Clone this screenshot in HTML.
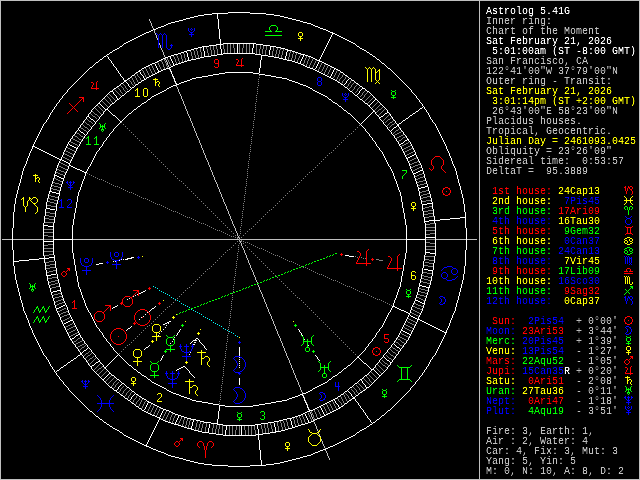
<!DOCTYPE html>
<html><head><meta charset="utf-8"><title>Astrolog 5.41G</title>
<style>
html,body{margin:0;padding:0;background:#000;}
body{width:640px;height:480px;overflow:hidden;position:relative;}
#chart{position:absolute;left:0;top:0;width:640px;height:480px;display:block;}
#info{position:absolute;left:485.5px;top:7.3px;margin:0;padding:0;font-family:"Liberation Mono",monospace;font-size:10px;line-height:10px;letter-spacing:0;color:#BFBFBF;will-change:transform;transform:translateZ(0);filter:url(#sharp);}
#info div{height:10px;white-space:pre;}
.w{color:#FFFFFF}.l{color:#BFBFBF}.y{color:#FFFF00}.r{color:#FF0000}.g{color:#00FF00}.b{color:#0000FF}
</style></head><body>
<svg id="chart" width="640" height="480" viewBox="0 0 640 480" shape-rendering="crispEdges" fill="none" stroke-width="1">
<rect x="0" y="0" width="640" height="480" fill="#000" stroke="none"/>
<defs><filter id="sharp" x="0" y="0" width="100%" height="100%" color-interpolation-filters="sRGB"><feComponentTransfer><feFuncA type="table" tableValues="0 0.05 0.55 1 1"/></feComponentTransfer></filter></defs>
<g transform="translate(0,0.5)">
<path stroke="#FFFFFF" d="M228 12h22M212 13h16M250 13h16M204 14h8M217 14h1M266 14h8M198 15h6M217 15h1M274 15h6M194 16h4M217 16h1M280 16h4M190 17h4M217 17h1M284 17h4M186 18h4M217 18h1M288 18h4M183 19h3M218 19h1M292 19h4M179 20h4M218 20h1M296 20h4M175 21h4M218 21h1M300 21h3M171 22h4M218 22h1M303 22h4M168 23h3M218 23h1M307 23h4M166 24h2M218 24h1M311 24h2M164 25h2M218 25h1M313 25h2M161 26h3M218 26h1M315 26h3M158 27h3M218 27h1M318 27h2M156 28h2M218 28h1M320 28h3M153 29h3M219 29h1M323 29h3M151 30h2M219 30h1M326 30h2M149 31h2M219 31h1M328 31h2M146 32h3M219 32h1M330 32h3M144 33h2M219 33h1M332 33h3M142 34h2M219 34h1M332 34h1M335 34h2M140 35h2M219 35h1M331 35h1M337 35h2M138 36h2M219 36h1M331 36h1M339 36h2M136 37h2M219 37h1M330 37h1M341 37h2M134 38h2M219 38h1M330 38h1M343 38h2M132 39h2M220 39h1M329 39h1M345 39h2M130 40h2M220 40h1M329 40h1M347 40h2M128 41h2M220 41h1M328 41h1M349 41h2M126 42h2M220 42h1M328 42h1M351 42h2M124 43h2M220 43h1M223 43h33M327 43h1M353 43h2M123 44h1M216 44h7M237 44h1M253 44h1M256 44h7M327 44h1M355 44h1M122 45h1M209 45h7M220 45h1M237 45h1M253 45h1M263 45h7M326 45h1M356 45h1M120 46h2M202 46h7M220 46h1M237 46h1M253 46h1M270 46h6M326 46h1M357 46h2M119 47h1M198 47h4M203 47h1M220 47h1M237 47h1M253 47h1M270 47h1M276 47h5M325 47h1M359 47h1M117 48h2M194 48h4M203 48h1M220 48h1M237 48h1M252 48h1M270 48h1M281 48h4M325 48h1M360 48h2M115 49h2M191 49h3M203 49h1M221 49h1M237 49h1M252 49h1M270 49h1M285 49h3M324 49h1M362 49h2M113 50h2M187 50h4M203 50h1M221 50h1M237 50h1M252 50h1M269 50h1M287 50h5M324 50h1M364 50h2M112 51h1M184 51h3M204 51h1M221 51h1M237 51h1M252 51h1M269 51h1M287 51h1M292 51h3M323 51h1M366 51h1M110 52h2M181 52h3M186 52h1M204 52h1M221 52h1M237 52h1M252 52h1M269 52h1M286 52h1M295 52h3M323 52h1M367 52h2M109 53h1M178 53h3M187 53h1M204 53h1M221 53h1M223 53h32M269 53h1M286 53h1M298 53h3M322 53h1M369 53h1M107 54h2M174 54h4M187 54h1M204 54h1M217 54h6M255 54h6M269 54h1M286 54h1M301 54h4M322 54h1M370 54h2M106 55h1M171 55h3M187 55h1M204 55h1M211 55h6M261 55h7M286 55h1M303 55h1M305 55h3M321 55h1M372 55h1M104 56h2M107 56h1M168 56h3M187 56h1M204 56h7M261 56h1M268 56h6M285 56h1M303 56h1M308 56h3M321 56h1M373 56h2M103 57h1M108 57h1M165 57h3M170 57h1M188 57h1M200 57h4M261 57h1M274 57h5M285 57h1M302 57h1M311 57h2M320 57h1M375 57h1M102 58h1M108 58h1M163 58h2M170 58h1M188 58h1M196 58h4M261 58h1M279 58h4M285 58h1M302 58h1M313 58h2M320 58h1M376 58h1M100 59h2M109 59h1M161 59h2M171 59h1M188 59h1M191 59h5M261 59h1M283 59h4M301 59h1M315 59h2M319 59h1M377 59h2M99 60h1M110 60h1M159 60h2M171 60h1M187 60h4M260 60h1M287 60h5M301 60h1M317 60h3M379 60h1M98 61h1M111 61h1M157 61h2M172 61h1M184 61h3M260 61h1M292 61h3M300 61h1M319 61h3M380 61h1M96 62h2M111 62h1M155 62h2M172 62h1M181 62h3M260 62h1M295 62h3M300 62h1M318 62h1M322 62h2M381 62h1M95 63h1M112 63h1M152 63h3M173 63h1M178 63h3M260 63h1M298 63h3M318 63h1M324 63h2M382 63h2M94 64h1M113 64h1M150 64h2M155 64h1M173 64h1M175 64h3M260 64h1M301 64h2M317 64h1M326 64h2M384 64h1M93 65h1M113 65h1M148 65h2M155 65h1M173 65h2M260 65h1M303 65h2M317 65h1M328 65h2M385 65h1M92 66h1M114 66h1M146 66h2M156 66h1M171 66h2M260 66h1M305 66h2M316 66h1M330 66h2M386 66h1M90 67h2M115 67h1M144 67h2M156 67h1M169 67h2M260 67h1M307 67h3M316 67h1M332 67h2M387 67h1M89 68h1M116 68h1M142 68h2M157 68h1M166 68h4M259 68h1M310 68h3M315 68h1M334 68h2M388 68h2M88 69h1M116 69h1M141 69h1M157 69h1M163 69h3M170 69h1M259 69h1M313 69h2M334 69h1M336 69h2M390 69h1M87 70h1M117 70h1M139 70h2M158 70h1M161 70h2M170 70h1M259 70h1M315 70h2M333 70h1M338 70h2M391 70h1M86 71h1M118 71h1M138 71h2M158 71h3M171 71h1M259 71h1M317 71h2M333 71h1M340 71h1M392 71h1M85 72h1M118 72h1M136 72h2M140 72h1M157 72h2M171 72h1M225 72h28M259 72h1M319 72h2M332 72h1M341 72h2M393 72h1M84 73h1M119 73h1M135 73h1M140 73h1M155 73h2M171 73h1M219 73h6M253 73h6M321 73h2M332 73h1M343 73h1M394 73h1M83 74h1M120 74h1M134 74h1M141 74h1M153 74h2M172 74h1M213 74h6M259 74h6M323 74h2M331 74h1M344 74h1M395 74h1M82 75h1M120 75h1M132 75h2M142 75h1M151 75h2M172 75h1M208 75h5M265 75h6M325 75h2M331 75h1M345 75h2M396 75h1M81 76h1M121 76h1M131 76h1M143 76h1M149 76h2M173 76h1M202 76h6M271 76h5M327 76h2M330 76h1M347 76h1M397 76h1M80 77h1M122 77h1M130 77h1M143 77h1M147 77h2M173 77h1M196 77h6M276 77h6M329 77h2M348 77h1M398 77h1M79 78h1M123 78h1M128 78h2M144 78h1M146 78h1M174 78h1M192 78h4M282 78h5M331 78h2M349 78h2M399 78h1M78 79h1M123 79h1M127 79h1M144 79h2M174 79h1M190 79h2M287 79h2M333 79h2M348 79h1M351 79h1M400 79h1M77 80h1M124 80h3M142 80h2M174 80h1M187 80h3M289 80h3M335 80h2M347 80h1M352 80h2M401 80h1M76 81h1M124 81h2M141 81h1M175 81h1M184 81h3M292 81h3M337 81h1M346 81h1M354 81h1M402 81h1M75 82h1M123 82h1M126 82h1M139 82h2M175 82h1M181 82h3M295 82h3M338 82h2M346 82h1M355 82h1M403 82h1M74 83h1M121 83h2M127 83h1M138 83h1M176 83h1M179 83h2M298 83h2M340 83h1M345 83h1M356 83h2M404 83h1M73 84h1M120 84h1M128 84h1M136 84h2M176 84h3M300 84h3M341 84h2M344 84h1M358 84h1M405 84h1M72 85h1M119 85h1M128 85h1M135 85h1M173 85h3M303 85h3M343 85h1M359 85h1M406 85h1M71 86h1M117 86h2M129 86h1M134 86h1M171 86h2M306 86h2M344 86h1M360 86h2M407 86h1M70 87h1M116 87h1M130 87h1M132 87h2M169 87h2M308 87h2M345 87h2M362 87h1M408 87h1M69 88h1M114 88h2M131 88h1M167 88h2M310 88h2M347 88h1M362 88h3M409 88h1M68 89h1M113 89h1M130 89h1M166 89h1M312 89h1M348 89h1M361 89h1M365 89h1M410 89h1M67 90h1M112 90h1M129 90h1M164 90h2M313 90h2M349 90h1M360 90h1M366 90h1M411 90h1M67 91h1M110 91h3M127 91h2M162 91h2M315 91h2M350 91h2M359 91h1M367 91h2M411 91h1M66 92h1M109 92h1M113 92h1M126 92h1M160 92h2M317 92h2M352 92h1M359 92h1M369 92h1M412 92h1M65 93h1M108 93h1M113 93h1M125 93h1M158 93h2M319 93h2M353 93h1M358 93h1M370 93h1M413 93h1M64 94h1M107 94h1M114 94h1M124 94h1M156 94h2M321 94h2M354 94h1M357 94h1M371 94h1M414 94h1M63 95h1M106 95h1M115 95h1M122 95h2M154 95h2M323 95h2M355 95h2M372 95h1M415 95h1M62 96h1M105 96h1M116 96h1M121 96h1M152 96h2M325 96h2M357 96h1M373 96h1M416 96h1M62 97h1M104 97h1M116 97h1M120 97h1M151 97h1M327 97h1M358 97h1M374 97h1M416 97h1M61 98h1M103 98h1M117 98h1M119 98h1M150 98h1M328 98h1M359 98h1M375 98h1M417 98h1M60 99h1M102 99h1M117 99h2M148 99h2M329 99h2M360 99h2M375 99h2M418 99h1M59 100h1M101 100h1M116 100h1M147 100h1M331 100h1M362 100h1M374 100h1M377 100h1M419 100h1M59 101h1M100 101h1M115 101h1M146 101h1M332 101h1M363 101h1M373 101h1M378 101h1M419 101h1M58 102h1M99 102h1M114 102h1M144 102h2M333 102h2M364 102h1M372 102h1M379 102h1M420 102h1M57 103h1M98 103h2M112 103h2M142 103h2M335 103h2M365 103h2M371 103h1M380 103h1M421 103h1M56 104h1M97 104h1M100 104h1M111 104h1M141 104h1M337 104h1M367 104h1M370 104h1M381 104h1M422 104h1M56 105h1M96 105h1M101 105h1M110 105h1M140 105h1M338 105h1M368 105h2M382 105h1M422 105h1M55 106h1M95 106h1M102 106h1M109 106h1M138 106h2M339 106h2M369 106h1M383 106h1M423 106h1M54 107h1M94 107h1M103 107h1M108 107h1M137 107h1M341 107h1M370 107h1M384 107h1M422 107h1M424 107h1M54 108h1M93 108h1M104 108h1M107 108h1M136 108h1M342 108h1M371 108h1M385 108h1M420 108h2M424 108h1M53 109h1M92 109h1M105 109h3M134 109h2M343 109h1M372 109h1M386 109h1M419 109h1M425 109h1M52 110h1M91 110h1M105 110h1M108 110h1M133 110h1M344 110h2M373 110h1M387 110h1M418 110h1M426 110h1M52 111h1M91 111h1M104 111h1M109 111h1M132 111h1M346 111h1M373 111h2M387 111h1M416 111h2M426 111h1M51 112h1M90 112h1M103 112h1M110 112h1M131 112h1M347 112h1M372 112h1M375 112h1M387 112h2M415 112h1M427 112h1M50 113h1M89 113h1M103 113h1M111 113h1M129 113h2M348 113h2M371 113h1M375 113h1M385 113h2M389 113h1M413 113h2M428 113h1M50 114h1M88 114h1M102 114h1M112 114h1M128 114h1M350 114h1M370 114h1M376 114h1M384 114h1M390 114h1M412 114h1M428 114h1M49 115h1M88 115h1M101 115h1M113 115h2M127 115h1M351 115h1M369 115h1M377 115h1M383 115h1M390 115h1M410 115h2M429 115h1M49 116h1M87 116h2M100 116h1M115 116h1M126 116h1M352 116h1M368 116h1M378 116h1M381 116h2M391 116h1M409 116h1M429 116h1M48 117h1M86 117h1M89 117h1M99 117h1M116 117h1M125 117h1M353 117h1M367 117h1M379 117h2M392 117h1M408 117h1M430 117h1M48 118h1M86 118h1M90 118h1M99 118h1M117 118h1M124 118h1M354 118h1M366 118h1M379 118h1M392 118h1M406 118h2M430 118h1M47 119h1M85 119h1M91 119h2M98 119h1M118 119h1M123 119h1M355 119h1M365 119h1M380 119h1M393 119h1M405 119h1M431 119h1M46 120h1M84 120h1M93 120h1M97 120h1M119 120h1M122 120h1M356 120h1M364 120h1M381 120h1M394 120h1M403 120h2M432 120h1M46 121h1M83 121h1M94 121h1M96 121h1M120 121h2M357 121h1M363 121h1M382 121h1M395 121h1M402 121h1M432 121h1M45 122h1M83 122h1M95 122h1M120 122h1M358 122h1M362 122h1M383 122h1M395 122h1M401 122h1M433 122h1M44 123h1M82 123h1M95 123h1M119 123h1M359 123h1M361 123h1M383 123h1M396 123h1M399 123h2M434 123h1M43 124h1M81 124h1M94 124h1M118 124h1M360 124h1M384 124h1M397 124h2M435 124h1M43 125h1M80 125h1M93 125h1M117 125h1M361 125h1M385 125h1M397 125h2M435 125h1M42 126h1M80 126h1M92 126h1M116 126h1M362 126h1M386 126h1M396 126h1M398 126h1M436 126h1M42 127h1M79 127h1M91 127h1M115 127h1M363 127h1M387 127h1M394 127h2M399 127h1M436 127h1M41 128h1M78 128h1M91 128h1M114 128h1M364 128h1M387 128h1M393 128h1M400 128h1M437 128h1M41 129h1M78 129h1M90 129h1M113 129h1M365 129h1M388 129h1M392 129h1M400 129h1M437 129h1M40 130h1M77 130h1M79 130h1M89 130h1M113 130h1M365 130h1M389 130h1M391 130h1M401 130h1M438 130h1M40 131h1M76 131h1M80 131h1M88 131h1M112 131h1M366 131h1M390 131h1M402 131h1M438 131h1M39 132h1M75 132h1M81 132h2M87 132h1M111 132h1M367 132h1M391 132h1M403 132h1M439 132h1M39 133h1M75 133h1M83 133h1M87 133h1M110 133h1M368 133h1M391 133h1M403 133h1M439 133h1M38 134h1M74 134h1M84 134h1M86 134h1M109 134h1M369 134h1M392 134h1M404 134h1M440 134h1M38 135h1M73 135h1M85 135h1M109 135h1M369 135h1M393 135h1M405 135h1M440 135h1M37 136h1M72 136h1M84 136h1M108 136h1M370 136h1M394 136h1M406 136h1M441 136h1M37 137h1M72 137h1M84 137h1M107 137h1M371 137h1M394 137h1M406 137h1M441 137h1M36 138h1M71 138h1M83 138h1M106 138h1M372 138h1M395 138h1M407 138h1M442 138h1M36 139h1M70 139h1M82 139h1M106 139h1M372 139h1M396 139h1M407 139h2M442 139h1M35 140h1M70 140h1M82 140h1M105 140h1M373 140h1M396 140h1M405 140h2M408 140h1M443 140h1M35 141h1M69 141h1M81 141h1M104 141h1M374 141h1M397 141h1M404 141h1M409 141h1M443 141h1M34 142h1M68 142h1M80 142h1M103 142h1M375 142h1M398 142h1M403 142h1M410 142h1M444 142h1M34 143h1M68 143h1M80 143h1M103 143h1M375 143h1M398 143h1M401 143h2M410 143h1M444 143h1M33 144h1M67 144h1M69 144h1M79 144h1M102 144h1M376 144h1M399 144h2M411 144h1M445 144h1M33 145h1M67 145h1M70 145h2M79 145h1M102 145h1M376 145h1M399 145h1M411 145h1M445 145h1M32 146h3M66 146h1M72 146h2M78 146h1M101 146h1M377 146h1M400 146h1M412 146h1M446 146h1M32 147h1M35 147h2M66 147h1M74 147h2M77 147h1M100 147h1M378 147h1M401 147h1M412 147h1M446 147h1M32 148h1M37 148h2M65 148h1M76 148h2M99 148h1M379 148h1M401 148h1M413 148h1M446 148h1M31 149h1M39 149h2M65 149h1M76 149h1M99 149h1M379 149h1M402 149h1M413 149h1M447 149h1M31 150h1M41 150h2M64 150h1M76 150h1M98 150h1M380 150h1M402 150h1M414 150h1M447 150h1M30 151h1M43 151h2M64 151h1M75 151h1M97 151h1M381 151h1M403 151h1M414 151h1M448 151h1M30 152h1M45 152h2M63 152h1M75 152h1M96 152h1M382 152h1M403 152h1M415 152h1M448 152h1M29 153h1M47 153h2M63 153h1M74 153h1M96 153h1M382 153h1M404 153h1M415 153h1M449 153h1M29 154h1M49 154h2M63 154h1M74 154h1M95 154h1M383 154h1M404 154h1M414 154h2M449 154h1M29 155h1M51 155h2M62 155h1M73 155h1M95 155h1M383 155h1M405 155h1M412 155h2M416 155h1M449 155h1M28 156h1M53 156h2M62 156h1M73 156h1M94 156h1M384 156h1M405 156h1M410 156h2M416 156h1M450 156h1M28 157h1M55 157h2M61 157h1M72 157h1M94 157h1M384 157h1M406 157h1M408 157h2M417 157h1M450 157h1M27 158h1M57 158h2M61 158h1M72 158h1M93 158h1M385 158h1M406 158h2M417 158h1M451 158h1M27 159h1M59 159h3M71 159h1M93 159h1M385 159h1M407 159h1M418 159h1M451 159h1M27 160h1M60 160h1M62 160h2M71 160h1M92 160h1M386 160h1M407 160h1M418 160h1M451 160h1M26 161h1M59 161h1M64 161h2M70 161h1M92 161h1M386 161h1M408 161h1M419 161h1M452 161h1M26 162h1M59 162h1M66 162h2M70 162h1M91 162h1M387 162h1M408 162h1M419 162h1M452 162h1M26 163h1M58 163h1M68 163h2M91 163h1M387 163h1M409 163h1M420 163h1M452 163h1M25 164h1M58 164h1M69 164h1M90 164h1M388 164h1M409 164h1M420 164h1M453 164h1M25 165h1M57 165h1M69 165h2M90 165h1M388 165h1M409 165h1M421 165h1M453 165h1M24 166h1M57 166h1M68 166h1M71 166h2M89 166h1M389 166h1M410 166h1M421 166h1M454 166h1M24 167h1M57 167h1M68 167h1M73 167h2M88 167h1M390 167h1M410 167h1M421 167h1M454 167h1M23 168h1M56 168h1M68 168h1M75 168h2M88 168h1M390 168h1M410 168h1M422 168h1M455 168h1M23 169h1M56 169h1M67 169h1M77 169h3M87 169h1M391 169h1M411 169h1M422 169h1M455 169h1M23 170h1M56 170h1M67 170h1M80 170h2M87 170h1M391 170h1M411 170h1M420 170h3M455 170h1M22 171h1M55 171h1M66 171h1M82 171h2M86 171h1M392 171h1M412 171h1M418 171h2M423 171h1M456 171h1M22 172h1M55 172h1M66 172h1M84 172h3M392 172h1M412 172h1M416 172h2M423 172h1M456 172h1M22 173h1M55 173h1M65 173h1M85 173h1M393 173h1M413 173h3M423 173h1M456 173h1M22 174h1M54 174h1M65 174h1M85 174h1M393 174h1M413 174h1M424 174h1M456 174h1M21 175h1M54 175h3M64 175h1M85 175h1M393 175h1M414 175h1M424 175h1M457 175h1M21 176h1M54 176h1M57 176h2M64 176h1M84 176h1M394 176h1M414 176h1M424 176h1M457 176h1M21 177h1M54 177h1M59 177h2M64 177h1M84 177h1M394 177h1M414 177h1M424 177h1M457 177h1M21 178h1M53 178h1M61 178h3M84 178h1M394 178h1M415 178h1M425 178h1M457 178h1M20 179h1M53 179h1M63 179h1M83 179h1M395 179h1M415 179h1M425 179h1M458 179h1M20 180h1M53 180h1M63 180h1M83 180h1M395 180h1M415 180h1M425 180h1M458 180h1M20 181h1M52 181h1M62 181h1M82 181h1M396 181h1M416 181h1M426 181h1M458 181h1M20 182h1M52 182h1M62 182h1M82 182h1M396 182h1M416 182h1M426 182h1M458 182h1M19 183h1M52 183h1M62 183h1M82 183h1M396 183h1M416 183h1M426 183h1M459 183h1M19 184h1M51 184h1M61 184h1M81 184h1M397 184h1M417 184h1M427 184h1M459 184h1M19 185h1M51 185h1M61 185h1M81 185h1M397 185h1M417 185h1M427 185h1M459 185h1M18 186h1M51 186h1M61 186h1M81 186h1M397 186h1M417 186h1M425 186h3M460 186h1M18 187h1M50 187h1M60 187h1M80 187h1M398 187h1M418 187h1M421 187h4M428 187h1M460 187h1M18 188h1M50 188h1M60 188h1M80 188h1M398 188h1M418 188h3M428 188h1M460 188h1M18 189h1M50 189h1M60 189h1M80 189h1M398 189h1M418 189h1M428 189h1M460 189h1M17 190h1M50 190h1M60 190h1M79 190h1M399 190h1M418 190h1M428 190h1M461 190h1M17 191h1M49 191h3M59 191h1M79 191h1M399 191h1M419 191h1M429 191h1M461 191h1M17 192h1M49 192h1M52 192h4M59 192h1M78 192h1M400 192h1M419 192h1M429 192h1M461 192h1M17 193h1M49 193h1M56 193h4M78 193h1M400 193h1M419 193h1M429 193h1M461 193h1M16 194h1M48 194h1M59 194h1M78 194h1M400 194h1M419 194h1M430 194h1M462 194h1M16 195h1M48 195h1M59 195h1M78 195h1M400 195h1M419 195h1M430 195h1M462 195h1M16 196h1M48 196h1M58 196h1M77 196h1M401 196h1M420 196h1M430 196h1M462 196h1M16 197h1M48 197h1M58 197h1M77 197h1M401 197h1M420 197h1M430 197h1M462 197h1M15 198h1M47 198h1M58 198h1M77 198h1M401 198h1M420 198h1M431 198h1M463 198h1M15 199h1M47 199h1M58 199h1M77 199h1M401 199h1M420 199h1M431 199h1M463 199h1M15 200h1M47 200h1M57 200h1M77 200h1M401 200h1M421 200h1M431 200h1M463 200h1M15 201h1M47 201h1M57 201h1M77 201h1M401 201h1M421 201h1M431 201h1M463 201h1M15 202h1M46 202h1M57 202h1M76 202h1M402 202h1M421 202h1M432 202h1M463 202h1M15 203h1M46 203h1M57 203h1M76 203h1M402 203h1M421 203h1M427 203h6M463 203h1M14 204h1M46 204h1M56 204h1M76 204h1M402 204h1M422 204h5M432 204h1M464 204h1M14 205h1M46 205h1M56 205h1M76 205h1M402 205h1M422 205h1M432 205h1M464 205h1M14 206h1M46 206h1M56 206h1M76 206h1M402 206h1M422 206h1M432 206h1M464 206h1M14 207h1M46 207h1M56 207h1M76 207h1M402 207h1M422 207h1M432 207h1M464 207h1M14 208h1M46 208h4M56 208h1M75 208h1M403 208h1M422 208h1M432 208h1M464 208h1M14 209h1M45 209h1M50 209h5M56 209h1M75 209h1M403 209h1M422 209h1M433 209h1M464 209h1M14 210h1M45 210h1M56 210h1M75 210h1M403 210h1M422 210h1M433 210h1M464 210h1M14 211h1M45 211h1M55 211h1M75 211h1M403 211h1M423 211h1M433 211h1M464 211h1M13 212h1M45 212h1M55 212h1M75 212h1M403 212h1M423 212h1M433 212h1M465 212h1M13 213h1M45 213h1M55 213h1M74 213h1M404 213h1M423 213h1M433 213h1M465 213h1M13 214h1M45 214h1M55 214h1M74 214h1M404 214h1M423 214h1M433 214h1M465 214h1M13 215h1M45 215h1M55 215h1M74 215h1M404 215h1M423 215h1M433 215h1M465 215h1M13 216h1M44 216h1M55 216h1M74 216h1M404 216h1M423 216h1M434 216h1M465 216h1M13 217h1M44 217h1M54 217h1M74 217h1M404 217h1M424 217h1M434 217h1M460 217h6M13 218h1M44 218h1M54 218h1M74 218h1M404 218h1M424 218h1M434 218h1M450 218h10M465 218h1M13 219h1M44 219h1M54 219h1M73 219h1M405 219h1M424 219h1M434 219h1M440 219h10M465 219h1M13 220h1M44 220h1M54 220h1M73 220h1M405 220h1M424 220h1M429 220h11M465 220h1M13 221h1M44 221h1M54 221h1M73 221h1M405 221h1M424 221h5M434 221h1M465 221h1M13 222h1M44 222h1M54 222h1M73 222h1M405 222h1M424 222h1M434 222h1M465 222h1M13 223h1M43 223h1M53 223h1M73 223h1M405 223h1M425 223h1M435 223h1M465 223h1M13 224h1M43 224h1M53 224h1M73 224h1M405 224h1M425 224h1M435 224h1M465 224h1M13 225h1M43 225h5M53 225h1M72 225h1M406 225h1M425 225h1M435 225h1M465 225h1M13 226h1M43 226h1M48 226h6M72 226h1M406 226h1M425 226h1M435 226h1M465 226h1M13 227h1M43 227h1M53 227h1M72 227h1M406 227h1M425 227h1M435 227h1M465 227h1M12 228h1M43 228h1M53 228h1M72 228h1M406 228h1M425 228h1M435 228h1M466 228h1M12 229h1M43 229h1M53 229h1M72 229h1M406 229h1M425 229h1M435 229h1M466 229h1M12 230h1M43 230h1M53 230h1M72 230h1M406 230h1M425 230h1M435 230h1M466 230h1M12 231h1M43 231h1M53 231h1M72 231h1M406 231h1M425 231h1M435 231h1M466 231h1M12 232h1M43 232h1M53 232h1M72 232h1M406 232h1M425 232h1M435 232h1M466 232h1M12 233h1M43 233h1M53 233h1M72 233h1M406 233h1M425 233h1M435 233h1M466 233h1M12 234h1M43 234h1M53 234h1M72 234h1M406 234h1M425 234h1M435 234h1M466 234h1M12 235h1M43 235h1M53 235h1M72 235h1M406 235h1M425 235h1M435 235h1M466 235h1M12 236h1M43 236h1M53 236h1M72 236h1M406 236h1M425 236h1M435 236h1M466 236h1M12 237h1M43 237h1M53 237h1M72 237h1M406 237h1M425 237h11M466 237h1M12 238h1M43 238h1M53 238h1M72 238h1M406 238h1M425 238h1M435 238h1M466 238h1M12 239h1M43 239h1M53 239h20M406 239h20M435 239h1M466 239h1M12 240h1M43 240h1M53 240h1M72 240h1M406 240h1M425 240h1M435 240h1M466 240h1M12 241h1M43 241h11M72 241h1M406 241h1M425 241h1M435 241h1M466 241h1M12 242h1M43 242h1M53 242h1M72 242h1M406 242h1M425 242h1M435 242h1M466 242h1M12 243h1M43 243h1M53 243h1M72 243h1M406 243h1M425 243h1M435 243h1M466 243h1M12 244h1M43 244h1M53 244h1M72 244h1M406 244h1M425 244h1M435 244h1M466 244h1M12 245h1M43 245h1M53 245h1M72 245h1M406 245h1M425 245h1M435 245h1M466 245h1M12 246h1M43 246h1M53 246h1M72 246h1M406 246h1M425 246h1M435 246h1M466 246h1M12 247h1M43 247h1M53 247h1M72 247h1M406 247h1M425 247h1M435 247h1M466 247h1M12 248h1M43 248h1M53 248h1M72 248h1M406 248h1M425 248h1M435 248h1M466 248h1M12 249h1M43 249h1M53 249h1M72 249h1M406 249h1M425 249h1M435 249h1M466 249h1M13 250h1M43 250h1M53 250h1M72 250h1M406 250h1M425 250h1M435 250h1M465 250h1M13 251h1M43 251h1M53 251h1M72 251h1M406 251h1M425 251h1M435 251h1M465 251h1M13 252h1M43 252h1M53 252h1M72 252h1M406 252h1M425 252h5M435 252h1M465 252h1M13 253h1M43 253h1M53 253h1M73 253h1M405 253h1M425 253h1M430 253h6M465 253h1M13 254h1M43 254h1M53 254h1M73 254h1M405 254h1M425 254h1M435 254h1M465 254h1M13 255h1M43 255h1M54 255h1M73 255h1M345 255h4M405 255h1M424 255h1M435 255h1M465 255h1M13 256h1M44 256h1M54 256h1M73 256h1M349 256h5M405 256h1M424 256h1M434 256h1M465 256h1M13 257h1M44 257h1M49 257h6M73 257h1M131 257h3M405 257h1M424 257h1M434 257h1M465 257h1M13 258h1M39 258h10M54 258h1M73 258h1M127 258h5M405 258h1M424 258h1M434 258h1M465 258h1M13 259h1M29 259h10M44 259h1M54 259h1M74 259h1M121 259h1M123 259h1M125 259h3M404 259h1M424 259h1M434 259h1M465 259h1M13 260h1M19 260h10M44 260h1M54 260h1M74 260h1M119 260h1M404 260h1M424 260h1M434 260h1M465 260h1M13 261h6M44 261h1M55 261h1M74 261h1M113 261h1M115 261h1M404 261h1M423 261h1M434 261h1M465 261h1M13 262h1M44 262h1M55 262h1M74 262h1M404 262h1M423 262h1M434 262h1M465 262h1M13 263h1M45 263h1M55 263h1M74 263h1M99 263h4M404 263h1M423 263h1M433 263h1M465 263h1M13 264h1M45 264h1M55 264h1M74 264h1M96 264h3M404 264h1M423 264h1M433 264h1M465 264h1M13 265h1M45 265h1M55 265h1M75 265h1M403 265h1M423 265h1M433 265h1M465 265h1M14 266h1M45 266h1M55 266h1M75 266h1M403 266h1M423 266h1M433 266h1M464 266h1M14 267h1M45 267h1M55 267h1M75 267h1M403 267h1M423 267h1M433 267h1M464 267h1M14 268h1M45 268h1M56 268h1M75 268h1M403 268h1M422 268h1M433 268h1M464 268h1M14 269h1M45 269h1M56 269h1M75 269h1M403 269h1M422 269h1M424 269h4M433 269h1M464 269h1M14 270h1M46 270h1M56 270h1M75 270h1M403 270h1M422 270h1M428 270h5M464 270h1M14 271h1M46 271h1M56 271h1M76 271h1M402 271h1M422 271h1M432 271h1M464 271h1M14 272h1M46 272h1M56 272h1M76 272h1M402 272h1M422 272h1M432 272h1M464 272h1M14 273h1M46 273h1M56 273h1M76 273h1M402 273h1M422 273h1M432 273h1M464 273h1M15 274h1M46 274h1M51 274h5M57 274h1M76 274h1M402 274h1M421 274h1M432 274h1M463 274h1M15 275h1M46 275h5M57 275h1M76 275h1M402 275h1M421 275h1M432 275h1M463 275h1M15 276h1M47 276h1M57 276h1M77 276h1M401 276h1M421 276h1M431 276h1M463 276h1M15 277h1M47 277h1M57 277h1M77 277h1M401 277h1M421 277h1M431 277h1M463 277h1M15 278h1M47 278h1M57 278h1M77 278h1M401 278h1M421 278h1M431 278h1M463 278h1M15 279h1M47 279h1M58 279h1M77 279h1M401 279h1M420 279h1M431 279h1M463 279h1M16 280h1M47 280h1M58 280h1M77 280h1M401 280h1M420 280h1M431 280h1M462 280h1M16 281h1M48 281h1M58 281h1M77 281h1M401 281h1M420 281h1M430 281h1M462 281h1M16 282h1M48 282h1M58 282h1M78 282h1M400 282h1M420 282h1M430 282h1M462 282h1M16 283h1M48 283h1M59 283h1M78 283h1M400 283h1M419 283h1M430 283h1M462 283h1M17 284h1M48 284h1M59 284h1M78 284h1M400 284h1M419 284h1M430 284h1M461 284h1M17 285h1M49 285h1M59 285h1M78 285h1M400 285h1M419 285h3M429 285h1M461 285h1M17 286h1M49 286h1M59 286h1M78 286h1M400 286h1M419 286h1M422 286h4M429 286h1M461 286h1M17 287h1M49 287h1M60 287h1M79 287h1M399 287h1M418 287h1M426 287h4M461 287h1M18 288h1M50 288h1M60 288h1M79 288h1M399 288h1M418 288h1M428 288h1M460 288h1M18 289h1M50 289h1M60 289h1M80 289h1M398 289h1M418 289h1M428 289h1M460 289h1M18 290h1M50 290h1M57 290h4M80 290h1M145 290h1M398 290h1M418 290h1M428 290h1M460 290h1M18 291h1M50 291h1M53 291h4M60 291h1M80 291h1M143 291h2M398 291h1M418 291h1M428 291h1M460 291h1M19 292h1M51 292h2M61 292h1M81 292h1M141 292h2M397 292h1M417 292h1M427 292h1M459 292h1M19 293h1M51 293h1M61 293h1M81 293h1M139 293h2M397 293h1M417 293h1M427 293h1M459 293h1M19 294h1M51 294h1M61 294h1M81 294h1M137 294h1M397 294h1M417 294h1M427 294h1M459 294h1M19 295h1M52 295h1M62 295h1M82 295h1M135 295h1M396 295h1M416 295h1M426 295h1M459 295h1M20 296h1M52 296h1M62 296h1M82 296h1M133 296h1M396 296h1M416 296h1M426 296h1M458 296h1M20 297h1M52 297h1M62 297h1M82 297h1M396 297h1M416 297h1M426 297h1M458 297h1M20 298h1M53 298h1M63 298h1M83 298h1M129 298h1M395 298h1M415 298h1M425 298h1M458 298h1M20 299h1M53 299h1M63 299h1M83 299h1M127 299h1M395 299h1M415 299h1M425 299h1M458 299h1M21 300h1M53 300h1M63 300h1M84 300h1M394 300h1M415 300h3M425 300h1M457 300h1M21 301h1M54 301h1M64 301h1M84 301h1M394 301h1M414 301h1M418 301h2M424 301h1M457 301h1M21 302h1M54 302h1M64 302h1M84 302h1M394 302h1M414 302h1M420 302h2M424 302h1M457 302h1M22 303h1M54 303h1M65 303h1M85 303h1M393 303h1M413 303h1M422 303h3M456 303h1M22 304h1M54 304h1M65 304h1M85 304h1M393 304h1M413 304h1M424 304h1M456 304h1M22 305h1M55 305h1M63 305h2M66 305h1M85 305h1M117 305h1M393 305h1M412 305h1M423 305h1M456 305h1M22 306h1M55 306h1M61 306h2M66 306h1M86 306h1M115 306h2M155 306h1M392 306h3M412 306h1M423 306h1M456 306h1M23 307h1M55 307h1M59 307h2M67 307h1M86 307h1M113 307h2M154 307h1M392 307h1M395 307h2M411 307h1M423 307h1M455 307h1M23 308h1M56 308h3M67 308h1M87 308h1M112 308h1M152 308h2M391 308h1M397 308h2M411 308h1M422 308h1M455 308h1M23 309h1M56 309h1M67 309h1M87 309h1M151 309h1M391 309h1M399 309h2M411 309h1M422 309h1M455 309h1M23 310h1M56 310h1M68 310h1M88 310h1M150 310h1M390 310h1M401 310h3M410 310h1M422 310h1M455 310h1M24 311h1M57 311h1M68 311h1M88 311h1M149 311h1M390 311h1M404 311h2M410 311h1M421 311h1M454 311h1M24 312h1M57 312h1M68 312h1M89 312h1M147 312h1M389 312h1M406 312h2M410 312h1M421 312h1M454 312h1M25 313h1M58 313h1M69 313h1M90 313h1M388 313h1M408 313h2M420 313h1M453 313h1M25 314h1M58 314h1M69 314h1M90 314h1M145 314h1M388 314h1M409 314h1M420 314h1M453 314h1M26 315h1M59 315h1M70 315h1M91 315h1M387 315h1M408 315h1M410 315h1M419 315h1M452 315h1M26 316h1M59 316h1M70 316h1M91 316h1M143 316h1M387 316h1M408 316h1M411 316h2M419 316h1M452 316h1M26 317h1M60 317h1M71 317h1M92 317h1M141 317h1M386 317h1M407 317h1M413 317h2M418 317h1M452 317h1M27 318h1M60 318h1M71 318h1M92 318h1M386 318h1M407 318h1M415 318h2M418 318h1M451 318h1M27 319h1M60 319h1M72 319h1M93 319h1M139 319h1M385 319h1M406 319h1M417 319h3M451 319h1M28 320h1M61 320h1M70 320h3M93 320h1M385 320h1M406 320h1M417 320h1M420 320h2M450 320h1M28 321h1M61 321h1M68 321h2M73 321h1M94 321h1M169 321h2M384 321h1M405 321h1M417 321h1M422 321h2M450 321h1M28 322h1M62 322h1M66 322h2M73 322h1M94 322h1M167 322h2M384 322h1M405 322h1M416 322h1M424 322h2M450 322h1M29 323h1M62 323h1M64 323h2M74 323h1M95 323h1M165 323h2M168 323h1M383 323h1M404 323h1M416 323h1M426 323h2M449 323h1M29 324h1M63 324h1M74 324h1M95 324h1M163 324h2M383 324h1M404 324h1M415 324h1M428 324h2M449 324h1M29 325h1M63 325h1M75 325h1M96 325h1M166 325h1M382 325h1M403 325h1M415 325h1M430 325h2M449 325h1M30 326h1M64 326h1M75 326h1M96 326h1M131 326h1M382 326h1M403 326h1M414 326h1M432 326h2M448 326h1M30 327h1M64 327h1M76 327h1M97 327h1M130 327h1M165 327h1M381 327h1M402 327h1M414 327h1M434 327h2M448 327h1M31 328h1M65 328h1M76 328h1M98 328h1M128 328h2M380 328h1M402 328h1M413 328h1M436 328h2M447 328h1M31 329h1M65 329h1M77 329h1M99 329h1M127 329h1M163 329h1M180 329h1M298 329h1M379 329h1M401 329h1M413 329h1M438 329h2M447 329h1M32 330h1M66 330h1M77 330h1M99 330h1M126 330h1M179 330h1M299 330h1M379 330h1M401 330h2M412 330h1M440 330h2M446 330h1M32 331h1M66 331h1M78 331h1M100 331h1M161 331h1M179 331h1M299 331h1M378 331h1M400 331h1M403 331h2M412 331h1M442 331h2M446 331h1M32 332h1M67 332h1M78 332h1M101 332h1M178 332h1M300 332h1M377 332h1M400 332h1M405 332h2M411 332h1M444 332h3M33 333h1M67 333h1M79 333h1M102 333h1M159 333h1M177 333h1M301 333h1M376 333h1M399 333h1M407 333h2M411 333h1M445 333h1M33 334h1M68 334h1M78 334h2M102 334h1M177 334h1M301 334h1M376 334h1M399 334h1M409 334h2M445 334h1M34 335h1M68 335h1M76 335h2M80 335h1M103 335h1M158 335h1M176 335h1M302 335h1M375 335h1M398 335h1M410 335h1M444 335h1M34 336h1M69 336h1M75 336h1M80 336h1M103 336h1M375 336h1M398 336h1M409 336h1M444 336h1M35 337h1M69 337h1M74 337h1M81 337h1M104 337h1M174 337h1M374 337h1M397 337h1M409 337h1M443 337h1M35 338h1M70 338h1M72 338h2M82 338h1M105 338h1M196 338h2M373 338h1M396 338h1M408 338h1M443 338h1M36 339h1M70 339h2M82 339h1M106 339h1M173 339h1M195 339h1M198 339h1M304 339h1M372 339h1M396 339h1M408 339h1M442 339h1M36 340h1M71 340h1M83 340h1M106 340h1M193 340h4M199 340h1M372 340h1M395 340h1M407 340h1M442 340h1M37 341h1M72 341h1M84 341h1M107 341h1M172 341h1M192 341h1M199 341h1M371 341h1M394 341h1M406 341h1M441 341h1M37 342h1M72 342h1M84 342h1M108 342h1M191 342h1M194 342h2M200 342h1M370 342h1M394 342h1M406 342h1M441 342h1M38 343h1M73 343h1M85 343h1M109 343h1M170 343h1M190 343h1M201 343h1M369 343h1M393 343h1M405 343h1M440 343h1M38 344h1M74 344h1M86 344h1M110 344h1M193 344h2M202 344h1M368 344h1M392 344h1M394 344h1M404 344h1M440 344h1M39 345h1M75 345h1M87 345h1M110 345h1M149 345h1M203 345h1M308 345h1M368 345h1M391 345h1M395 345h1M403 345h1M439 345h1M39 346h1M75 346h1M87 346h1M111 346h1M148 346h1M204 346h1M367 346h1M391 346h1M396 346h1M403 346h1M439 346h1M40 347h1M76 347h1M88 347h1M112 347h1M146 347h2M204 347h1M239 347h1M366 347h1M390 347h1M397 347h2M402 347h1M438 347h1M40 348h1M77 348h1M87 348h1M89 348h1M113 348h1M145 348h1M205 348h1M239 348h1M365 348h1M389 348h1M399 348h1M401 348h1M438 348h1M41 349h1M78 349h1M86 349h1M90 349h1M113 349h1M144 349h1M206 349h1M239 349h1M365 349h1M388 349h1M400 349h1M437 349h1M41 350h1M78 350h1M84 350h2M91 350h1M114 350h1M239 350h1M364 350h1M387 350h1M400 350h1M437 350h1M42 351h1M79 351h1M83 351h1M91 351h1M115 351h1M239 351h1M363 351h1M387 351h1M399 351h1M436 351h1M42 352h1M80 352h1M82 352h1M92 352h1M116 352h1M190 352h1M239 352h1M362 352h1M386 352h1M398 352h1M436 352h1M43 353h1M80 353h2M93 353h1M117 353h1M239 353h1M361 353h1M385 353h1M398 353h1M435 353h1M43 354h1M80 354h2M94 354h1M118 354h1M189 354h1M239 354h1M360 354h1M384 354h1M397 354h1M435 354h1M44 355h1M78 355h2M82 355h1M95 355h1M117 355h1M119 355h1M163 355h1M239 355h1M315 355h1M359 355h1M383 355h1M396 355h1M434 355h1M45 356h1M77 356h1M83 356h1M95 356h1M116 356h1M120 356h1M162 356h1M316 356h1M358 356h1M383 356h1M395 356h1M433 356h1M46 357h1M76 357h1M83 357h1M96 357h1M115 357h1M121 357h1M162 357h1M239 357h1M317 357h1M357 357h2M382 357h1M384 357h1M395 357h1M432 357h1M46 358h1M74 358h2M84 358h1M97 358h1M114 358h1M122 358h1M161 358h1M317 358h1M356 358h1M359 358h1M381 358h1M385 358h1M394 358h1M432 358h1M47 359h1M73 359h1M85 359h1M98 359h1M113 359h1M123 359h1M161 359h1M239 359h1M318 359h1M355 359h1M360 359h1M380 359h1M386 359h1M393 359h1M431 359h1M48 360h1M71 360h2M86 360h1M99 360h1M112 360h1M124 360h1M160 360h1M319 360h1M354 360h1M361 360h1M379 360h1M387 360h2M392 360h1M430 360h1M48 361h1M70 361h1M86 361h1M98 361h2M111 361h1M125 361h1M239 361h1M353 361h1M362 361h1M379 361h1M389 361h1M392 361h1M430 361h1M49 362h1M68 362h2M87 362h1M96 362h2M100 362h1M110 362h1M126 362h1M352 362h1M363 362h1M378 362h1M390 362h2M429 362h1M49 363h1M67 363h1M88 363h1M95 363h1M101 363h1M109 363h1M127 363h1M239 363h1M351 363h1M364 363h2M377 363h1M390 363h1M429 363h1M50 364h1M66 364h1M88 364h1M94 364h1M102 364h1M108 364h1M128 364h1M350 364h1M366 364h1M376 364h1M390 364h1M428 364h1M50 365h1M64 365h2M89 365h1M92 365h2M103 365h1M107 365h1M129 365h2M239 365h1M348 365h2M367 365h1M375 365h1M389 365h1M428 365h1M51 366h1M63 366h1M90 366h2M103 366h1M106 366h1M131 366h1M183 366h2M347 366h1M368 366h1M375 366h1M388 366h1M427 366h1M52 367h1M61 367h2M91 367h1M104 367h2M132 367h1M181 367h2M185 367h1M239 367h1M346 367h1M369 367h1M374 367h1M387 367h1M426 367h1M52 368h1M60 368h1M91 368h1M105 368h1M133 368h1M179 368h2M186 368h1M344 368h2M370 368h1M373 368h1M387 368h1M426 368h1M53 369h1M59 369h1M92 369h1M106 369h1M134 369h2M177 369h2M187 369h1M343 369h1M371 369h3M386 369h1M425 369h1M54 370h1M57 370h2M93 370h1M107 370h1M136 370h1M176 370h1M188 370h1M342 370h1M371 370h1M374 370h1M385 370h1M424 370h1M54 371h1M56 371h1M94 371h1M108 371h1M137 371h1M189 371h1M341 371h1M370 371h1M375 371h1M384 371h1M424 371h1M55 372h1M95 372h1M109 372h1M138 372h2M189 372h1M339 372h2M369 372h1M376 372h1M383 372h1M423 372h1M56 373h1M96 373h1M109 373h2M140 373h1M190 373h1M338 373h1M368 373h1M377 373h1M382 373h1M422 373h1M56 374h1M97 374h1M108 374h1M111 374h1M141 374h1M191 374h1M337 374h1M367 374h1M378 374h1M381 374h1M422 374h1M57 375h1M98 375h1M107 375h1M112 375h2M142 375h2M192 375h1M335 375h2M365 375h2M379 375h2M421 375h1M58 376h1M99 376h1M106 376h1M114 376h1M144 376h2M193 376h1M333 376h2M364 376h1M379 376h1M420 376h1M59 377h1M100 377h1M105 377h1M115 377h1M146 377h1M194 377h1M332 377h1M363 377h1M378 377h1M419 377h1M59 378h1M101 378h1M104 378h1M116 378h1M147 378h1M239 378h1M331 378h1M362 378h1M377 378h1M419 378h1M60 379h1M102 379h2M117 379h2M148 379h2M239 379h1M329 379h2M360 379h2M376 379h1M418 379h1M61 380h1M103 380h1M119 380h1M150 380h1M239 380h1M328 380h1M359 380h1M361 380h1M375 380h1M417 380h1M62 381h1M104 381h1M120 381h1M151 381h1M239 381h1M327 381h1M358 381h1M362 381h1M374 381h1M416 381h1M63 382h1M105 382h1M121 382h1M152 382h2M239 382h1M325 382h2M357 382h1M362 382h1M373 382h1M415 382h1M63 383h1M106 383h1M122 383h2M154 383h2M239 383h1M323 383h2M355 383h2M363 383h1M372 383h1M415 383h1M64 384h1M107 384h1M121 384h1M124 384h1M156 384h2M239 384h1M321 384h2M354 384h1M364 384h1M371 384h1M414 384h1M65 385h1M108 385h1M120 385h1M125 385h1M158 385h2M319 385h2M353 385h1M365 385h1M370 385h1M413 385h1M66 386h1M109 386h1M119 386h1M126 386h1M160 386h2M317 386h2M352 386h1M365 386h1M369 386h1M412 386h1M67 387h1M110 387h2M118 387h1M127 387h2M162 387h2M315 387h2M350 387h2M366 387h3M411 387h1M68 388h1M112 388h1M118 388h1M129 388h1M164 388h2M313 388h2M349 388h1M366 388h1M410 388h1M68 389h1M113 389h1M117 389h1M130 389h1M166 389h1M312 389h1M348 389h1M365 389h1M410 389h1M69 390h1M114 390h3M131 390h1M167 390h2M310 390h2M347 390h1M363 390h2M409 390h1M70 391h1M116 391h1M132 391h2M169 391h2M308 391h2M345 391h2M348 391h1M362 391h1M408 391h1M71 392h1M117 392h2M134 392h1M171 392h2M306 392h2M344 392h1M349 392h1M360 392h2M407 392h1M72 393h1M119 393h1M135 393h1M173 393h3M303 393h3M343 393h1M350 393h1M359 393h1M406 393h1M73 394h1M120 394h1M134 394h1M136 394h2M176 394h3M300 394h3M341 394h2M351 394h1M358 394h1M405 394h1M74 395h1M121 395h2M133 395h1M138 395h1M179 395h2M298 395h2M302 395h1M340 395h1M351 395h1M356 395h2M404 395h1M75 396h1M123 396h1M132 396h1M139 396h2M181 396h3M295 396h3M303 396h1M338 396h2M352 396h1M355 396h1M403 396h1M76 397h1M124 397h1M131 397h1M141 397h1M184 397h3M292 397h3M303 397h1M337 397h1M353 397h2M402 397h1M77 398h1M125 398h2M131 398h1M142 398h2M187 398h3M289 398h3M304 398h1M335 398h2M352 398h3M401 398h1M78 399h1M127 399h1M130 399h1M144 399h2M190 399h2M287 399h2M304 399h1M333 399h2M351 399h1M355 399h1M400 399h1M79 400h1M128 400h2M146 400h1M192 400h4M282 400h5M304 400h1M331 400h2M334 400h1M349 400h2M355 400h1M399 400h1M80 401h1M130 401h1M147 401h2M196 401h6M276 401h6M305 401h1M329 401h2M335 401h1M348 401h1M356 401h1M398 401h1M81 402h1M131 402h1M148 402h3M202 402h6M271 402h5M305 402h1M327 402h2M335 402h1M347 402h1M357 402h1M397 402h1M82 403h1M132 403h2M147 403h1M151 403h2M208 403h5M265 403h6M306 403h1M325 403h2M336 403h1M345 403h2M358 403h1M396 403h1M83 404h1M134 404h1M147 404h1M153 404h2M213 404h6M259 404h6M306 404h1M323 404h2M337 404h1M344 404h1M358 404h1M395 404h1M84 405h1M135 405h1M146 405h1M155 405h2M219 405h6M253 405h6M307 405h1M321 405h2M338 405h1M343 405h1M359 405h1M394 405h1M85 406h1M136 406h2M146 406h1M157 406h2M219 406h1M225 406h28M307 406h1M319 406h2M338 406h1M341 406h2M360 406h1M393 406h1M86 407h1M138 407h1M145 407h1M159 407h2M219 407h1M307 407h1M317 407h2M320 407h1M339 407h2M360 407h1M392 407h1M87 408h1M139 408h2M145 408h1M161 408h2M219 408h1M308 408h1M315 408h2M321 408h1M338 408h2M361 408h1M391 408h1M88 409h1M141 409h1M144 409h1M163 409h3M219 409h1M308 409h1M313 409h2M321 409h1M336 409h2M362 409h1M390 409h1M89 410h1M142 410h2M163 410h1M166 410h3M219 410h1M309 410h4M322 410h1M334 410h2M363 410h1M388 410h2M90 411h2M144 411h2M162 411h1M169 411h2M218 411h1M307 411h3M322 411h1M332 411h2M363 411h1M387 411h1M92 412h1M146 412h2M162 412h1M171 412h2M218 412h1M305 412h2M323 412h1M330 412h2M364 412h1M386 412h1M93 413h1M148 413h2M161 413h1M173 413h2M218 413h1M303 413h2M323 413h1M328 413h2M365 413h1M385 413h1M94 414h1M150 414h2M161 414h1M175 414h3M218 414h1M301 414h2M305 414h1M324 414h1M326 414h2M365 414h1M384 414h1M95 415h1M152 415h3M160 415h1M178 415h3M218 415h1M298 415h3M305 415h1M324 415h2M366 415h1M382 415h2M96 416h2M155 416h2M160 416h1M178 416h1M181 416h3M218 416h1M295 416h3M306 416h1M322 416h2M367 416h1M381 416h1M98 417h1M157 417h3M178 417h1M184 417h3M218 417h1M292 417h3M306 417h1M320 417h2M367 417h1M380 417h1M99 418h1M159 418h2M177 418h1M187 418h4M218 418h1M287 418h5M307 418h1M317 418h3M368 418h1M379 418h1M100 419h2M159 419h1M161 419h2M177 419h1M191 419h5M217 419h1M283 419h4M290 419h1M307 419h1M315 419h2M369 419h1M377 419h2M102 420h1M158 420h1M163 420h2M176 420h1M193 420h1M196 420h4M217 420h1M279 420h4M290 420h1M308 420h1M313 420h2M370 420h1M376 420h1M103 421h1M158 421h1M165 421h3M176 421h1M193 421h1M200 421h4M217 421h1M274 421h5M291 421h1M308 421h1M311 421h2M370 421h1M375 421h1M104 422h2M157 422h1M168 422h3M175 422h1M192 422h1M204 422h7M217 422h1M268 422h6M291 422h1M308 422h3M371 422h1M373 422h2M106 423h1M157 423h1M171 423h3M175 423h1M192 423h1M211 423h7M261 423h7M274 423h1M291 423h1M305 423h3M372 423h1M107 424h2M156 424h1M174 424h4M192 424h1M209 424h1M217 424h6M255 424h6M274 424h1M291 424h1M301 424h4M370 424h2M109 425h1M156 425h1M178 425h3M192 425h1M209 425h1M223 425h32M257 425h1M274 425h1M292 425h1M298 425h3M369 425h1M110 426h2M155 426h1M181 426h3M191 426h1M209 426h1M226 426h1M241 426h1M257 426h1M274 426h1M292 426h1M295 426h3M367 426h2M112 427h1M155 427h1M184 427h3M191 427h1M209 427h1M226 427h1M241 427h1M257 427h1M275 427h1M292 427h3M366 427h1M113 428h2M154 428h1M187 428h5M208 428h1M226 428h1M241 428h1M257 428h1M275 428h1M288 428h4M364 428h2M115 429h2M154 429h1M191 429h3M208 429h1M226 429h1M241 429h1M258 429h1M275 429h1M285 429h3M362 429h2M117 430h2M153 430h1M194 430h4M208 430h1M225 430h1M241 430h1M258 430h1M275 430h1M281 430h4M360 430h2M119 431h1M153 431h1M198 431h4M208 431h1M225 431h1M241 431h1M258 431h1M275 431h6M359 431h1M120 432h2M152 432h1M202 432h7M225 432h1M241 432h1M258 432h1M270 432h6M357 432h2M122 433h1M152 433h1M209 433h7M225 433h1M241 433h1M258 433h1M263 433h7M356 433h1M123 434h1M151 434h1M216 434h7M225 434h1M241 434h1M256 434h7M355 434h1M124 435h2M151 435h1M223 435h33M258 435h1M353 435h2M126 436h2M150 436h1M258 436h1M351 436h2M128 437h2M150 437h1M258 437h1M349 437h2M130 438h2M149 438h1M258 438h1M347 438h2M132 439h2M149 439h1M258 439h1M345 439h2M134 440h2M148 440h1M259 440h1M343 440h2M136 441h2M148 441h1M259 441h1M341 441h2M138 442h2M147 442h1M259 442h1M339 442h2M140 443h2M147 443h1M259 443h1M337 443h2M142 444h2M146 444h1M259 444h1M335 444h2M144 445h3M259 445h1M333 445h2M146 446h3M259 446h1M330 446h3M149 447h2M259 447h1M328 447h2M151 448h2M259 448h1M326 448h2M153 449h3M259 449h1M323 449h3M156 450h2M260 450h1M320 450h3M158 451h3M260 451h1M318 451h2M161 452h3M260 452h1M315 452h3M164 453h2M260 453h1M313 453h2M166 454h2M260 454h1M311 454h2M168 455h3M260 455h1M307 455h4M171 456h4M260 456h1M303 456h4M175 457h4M260 457h1M300 457h3M179 458h4M260 458h1M296 458h4M183 459h3M260 459h1M292 459h4M186 460h4M261 460h1M288 460h4M190 461h4M261 461h1M284 461h4M194 462h4M261 462h1M280 462h4M198 463h6M261 463h1M274 463h6M204 464h8M261 464h1M266 464h8M212 465h16M250 465h16M228 466h22"/>
<path stroke="#BFBFBF" d="M0 0h640M0 1h1M479 1h1M639 1h1M0 2h1M479 2h1M639 2h1M0 3h1M479 3h1M639 3h1M0 4h1M479 4h1M639 4h1M0 5h1M479 5h1M639 5h1M0 6h1M479 6h1M639 6h1M0 7h1M479 7h1M639 7h1M0 8h1M479 8h1M639 8h1M0 9h1M479 9h1M639 9h1M0 10h1M479 10h1M639 10h1M0 11h1M479 11h1M639 11h1M0 12h1M479 12h1M639 12h1M0 13h1M479 13h1M639 13h1M0 14h1M479 14h1M639 14h1M0 15h1M479 15h1M639 15h1M0 16h1M479 16h1M639 16h1M0 17h1M479 17h1M639 17h1M0 18h1M479 18h1M639 18h1M0 19h1M149 19h1M479 19h1M639 19h1M0 20h1M149 20h1M479 20h1M639 20h1M0 21h1M150 21h1M479 21h1M639 21h1M0 22h1M150 22h1M479 22h1M639 22h1M0 23h1M151 23h1M479 23h1M639 23h1M0 24h1M151 24h1M479 24h1M639 24h1M0 25h1M151 25h1M479 25h1M639 25h1M0 26h1M152 26h1M479 26h1M639 26h1M0 27h1M152 27h1M479 27h1M639 27h1M0 28h1M153 28h1M479 28h1M639 28h1M0 29h1M479 29h1M639 29h1M0 30h1M154 30h1M479 30h1M639 30h1M0 31h1M154 31h1M479 31h1M639 31h1M0 32h1M154 32h1M479 32h1M639 32h1M0 33h1M155 33h1M479 33h1M639 33h1M0 34h1M155 34h1M479 34h1M639 34h1M0 35h1M156 35h1M479 35h1M639 35h1M0 36h1M156 36h1M479 36h1M639 36h1M0 37h1M156 37h1M479 37h1M639 37h1M0 38h1M157 38h1M479 38h1M639 38h1M0 39h1M157 39h1M479 39h1M639 39h1M0 40h1M479 40h1M639 40h1M0 41h1M479 41h1M639 41h1M0 42h1M479 42h1M639 42h1M0 43h1M159 43h1M479 43h1M639 43h1M0 44h1M159 44h1M479 44h1M639 44h1M0 45h1M160 45h1M479 45h1M639 45h1M0 46h1M160 46h1M479 46h1M639 46h1M0 47h1M160 47h1M479 47h1M639 47h1M0 48h1M161 48h1M479 48h1M639 48h1M0 49h1M161 49h1M479 49h1M639 49h1M0 50h1M162 50h1M479 50h1M639 50h1M0 51h1M162 51h1M479 51h1M639 51h1M0 52h1M163 52h1M479 52h1M639 52h1M0 53h1M163 53h1M479 53h1M639 53h1M0 54h1M163 54h1M479 54h1M639 54h1M0 55h1M164 55h1M479 55h1M639 55h1M0 56h1M164 56h1M479 56h1M639 56h1M0 57h1M479 57h1M639 57h1M0 58h1M165 58h1M479 58h1M639 58h1M0 59h1M165 59h1M479 59h1M639 59h1M0 60h1M166 60h1M479 60h1M639 60h1M0 61h1M166 61h1M479 61h1M639 61h1M0 62h1M167 62h1M479 62h1M639 62h1M0 63h1M167 63h1M479 63h1M639 63h1M0 64h1M167 64h1M479 64h1M639 64h1M0 65h1M168 65h1M479 65h1M639 65h1M0 66h1M168 66h1M479 66h1M639 66h1M0 67h1M479 67h1M639 67h1M0 68h1M479 68h1M639 68h1M0 69h1M169 69h1M479 69h1M639 69h1M0 70h1M479 70h1M639 70h1M0 71h1M170 71h1M479 71h1M639 71h1M0 72h1M479 72h1M639 72h1M0 73h1M479 73h1M639 73h1M0 74h1M479 74h1M639 74h1M0 75h1M479 75h1M639 75h1M0 76h1M172 76h1M479 76h1M639 76h1M0 77h1M479 77h1M639 77h1M0 78h1M173 78h1M479 78h1M639 78h1M0 79h1M479 79h1M639 79h1M0 80h1M479 80h1M639 80h1M0 81h1M174 81h1M479 81h1M639 81h1M0 82h1M479 82h1M639 82h1M0 83h1M175 83h1M479 83h1M639 83h1M0 84h1M479 84h1M639 84h1M0 85h1M176 85h1M479 85h1M639 85h1M0 86h1M176 86h1M479 86h1M639 86h1M0 87h1M177 87h1M479 87h1M639 87h1M0 88h1M177 88h1M479 88h1M639 88h1M0 89h1M178 89h1M479 89h1M639 89h1M0 90h1M178 90h1M479 90h1M639 90h1M0 91h1M178 91h1M479 91h1M639 91h1M0 92h1M179 92h1M479 92h1M639 92h1M0 93h1M179 93h1M479 93h1M639 93h1M0 94h1M180 94h1M479 94h1M639 94h1M0 95h1M180 95h1M479 95h1M639 95h1M0 96h1M181 96h1M479 96h1M639 96h1M0 97h1M181 97h1M479 97h1M639 97h1M0 98h1M181 98h1M479 98h1M639 98h1M0 99h1M182 99h1M479 99h1M639 99h1M0 100h1M182 100h1M479 100h1M639 100h1M0 101h1M183 101h1M479 101h1M639 101h1M0 102h1M183 102h1M479 102h1M639 102h1M0 103h1M183 103h1M479 103h1M639 103h1M0 104h1M184 104h1M479 104h1M639 104h1M0 105h1M184 105h1M479 105h1M639 105h1M0 106h1M185 106h1M479 106h1M639 106h1M0 107h1M185 107h1M479 107h1M639 107h1M0 108h1M185 108h1M479 108h1M639 108h1M0 109h1M186 109h1M479 109h1M639 109h1M0 110h1M186 110h1M479 110h1M639 110h1M0 111h1M187 111h1M479 111h1M639 111h1M0 112h1M187 112h1M479 112h1M639 112h1M0 113h1M187 113h1M479 113h1M639 113h1M0 114h1M188 114h1M479 114h1M639 114h1M0 115h1M188 115h1M479 115h1M639 115h1M0 116h1M189 116h1M479 116h1M639 116h1M0 117h1M189 117h1M479 117h1M639 117h1M0 118h1M190 118h1M479 118h1M639 118h1M0 119h1M190 119h1M479 119h1M639 119h1M0 120h1M190 120h1M479 120h1M639 120h1M0 121h1M191 121h1M479 121h1M639 121h1M0 122h1M191 122h1M479 122h1M639 122h1M0 123h1M192 123h1M479 123h1M639 123h1M0 124h1M192 124h1M479 124h1M639 124h1M0 125h1M192 125h1M479 125h1M639 125h1M0 126h1M193 126h1M479 126h1M639 126h1M0 127h1M193 127h1M479 127h1M639 127h1M0 128h1M194 128h1M479 128h1M639 128h1M0 129h1M194 129h1M479 129h1M639 129h1M0 130h1M194 130h1M479 130h1M639 130h1M0 131h1M195 131h1M479 131h1M639 131h1M0 132h1M195 132h1M479 132h1M639 132h1M0 133h1M196 133h1M479 133h1M639 133h1M0 134h1M196 134h1M479 134h1M639 134h1M0 135h1M196 135h1M479 135h1M639 135h1M0 136h1M197 136h1M479 136h1M639 136h1M0 137h1M197 137h1M479 137h1M639 137h1M0 138h1M198 138h1M479 138h1M639 138h1M0 139h1M198 139h1M479 139h1M639 139h1M0 140h1M199 140h1M479 140h1M639 140h1M0 141h1M199 141h1M479 141h1M639 141h1M0 142h1M199 142h1M479 142h1M639 142h1M0 143h1M200 143h1M479 143h1M639 143h1M0 144h1M200 144h1M479 144h1M639 144h1M0 145h1M201 145h1M479 145h1M639 145h1M0 146h1M201 146h1M479 146h1M639 146h1M0 147h1M201 147h1M479 147h1M639 147h1M0 148h1M202 148h1M479 148h1M639 148h1M0 149h1M202 149h1M479 149h1M639 149h1M0 150h1M203 150h1M479 150h1M639 150h1M0 151h1M203 151h1M479 151h1M639 151h1M0 152h1M203 152h1M479 152h1M639 152h1M0 153h1M204 153h1M479 153h1M639 153h1M0 154h1M204 154h1M479 154h1M639 154h1M0 155h1M205 155h1M479 155h1M639 155h1M0 156h1M205 156h1M479 156h1M639 156h1M0 157h1M205 157h1M479 157h1M639 157h1M0 158h1M206 158h1M479 158h1M639 158h1M0 159h1M206 159h1M479 159h1M639 159h1M0 160h1M207 160h1M479 160h1M639 160h1M0 161h1M207 161h1M479 161h1M639 161h1M0 162h1M208 162h1M479 162h1M639 162h1M0 163h1M208 163h1M479 163h1M639 163h1M0 164h1M208 164h1M479 164h1M639 164h1M0 165h1M209 165h1M479 165h1M639 165h1M0 166h1M209 166h1M479 166h1M639 166h1M0 167h1M210 167h1M479 167h1M639 167h1M0 168h1M210 168h1M479 168h1M639 168h1M0 169h1M210 169h1M479 169h1M639 169h1M0 170h1M211 170h1M479 170h1M639 170h1M0 171h1M211 171h1M479 171h1M639 171h1M0 172h1M212 172h1M479 172h1M639 172h1M0 173h1M212 173h1M479 173h1M639 173h1M0 174h1M212 174h1M479 174h1M639 174h1M0 175h1M213 175h1M479 175h1M639 175h1M0 176h1M213 176h1M479 176h1M639 176h1M0 177h1M214 177h1M479 177h1M639 177h1M0 178h1M214 178h1M479 178h1M639 178h1M0 179h1M214 179h1M479 179h1M639 179h1M0 180h1M215 180h1M479 180h1M639 180h1M0 181h1M215 181h1M479 181h1M639 181h1M0 182h1M216 182h1M479 182h1M639 182h1M0 183h1M216 183h1M479 183h1M639 183h1M0 184h1M217 184h1M479 184h1M639 184h1M0 185h1M217 185h1M479 185h1M639 185h1M0 186h1M217 186h1M479 186h1M639 186h1M0 187h1M218 187h1M479 187h1M639 187h1M0 188h1M218 188h1M479 188h1M639 188h1M0 189h1M219 189h1M479 189h1M639 189h1M0 190h1M219 190h1M479 190h1M639 190h1M0 191h1M219 191h1M479 191h1M639 191h1M0 192h1M220 192h1M479 192h1M639 192h1M0 193h1M220 193h1M479 193h1M639 193h1M0 194h1M221 194h1M479 194h1M639 194h1M0 195h1M221 195h1M479 195h1M639 195h1M0 196h1M221 196h1M479 196h1M639 196h1M0 197h1M222 197h1M479 197h1M639 197h1M0 198h1M222 198h1M479 198h1M639 198h1M0 199h1M223 199h1M479 199h1M639 199h1M0 200h1M223 200h1M479 200h1M639 200h1M0 201h1M223 201h1M479 201h1M639 201h1M0 202h1M224 202h1M479 202h1M639 202h1M0 203h1M224 203h1M479 203h1M639 203h1M0 204h1M225 204h1M479 204h1M639 204h1M0 205h1M225 205h1M479 205h1M639 205h1M0 206h1M226 206h1M479 206h1M639 206h1M0 207h1M226 207h1M479 207h1M639 207h1M0 208h1M226 208h1M479 208h1M639 208h1M0 209h1M227 209h1M479 209h1M639 209h1M0 210h1M227 210h1M479 210h1M639 210h1M0 211h1M228 211h1M479 211h1M639 211h1M0 212h1M228 212h1M479 212h1M639 212h1M0 213h1M228 213h1M479 213h1M639 213h1M0 214h1M229 214h1M479 214h1M639 214h1M0 215h1M229 215h1M479 215h1M639 215h1M0 216h1M230 216h1M479 216h1M639 216h1M0 217h1M230 217h1M479 217h1M639 217h1M0 218h1M230 218h1M479 218h1M639 218h1M0 219h1M231 219h1M479 219h1M639 219h1M0 220h1M231 220h1M479 220h1M639 220h1M0 221h1M232 221h1M479 221h1M639 221h1M0 222h1M232 222h1M479 222h1M639 222h1M0 223h1M232 223h1M479 223h1M639 223h1M0 224h1M233 224h1M479 224h1M639 224h1M0 225h1M233 225h1M479 225h1M639 225h1M0 226h1M234 226h1M479 226h1M639 226h1M0 227h1M234 227h1M479 227h1M639 227h1M0 228h1M235 228h1M479 228h1M639 228h1M0 229h1M235 229h1M479 229h1M639 229h1M0 230h1M235 230h1M479 230h1M639 230h1M0 231h1M236 231h1M479 231h1M639 231h1M0 232h1M236 232h1M479 232h1M639 232h1M0 233h1M237 233h1M479 233h1M639 233h1M0 234h1M237 234h1M479 234h1M639 234h1M0 235h1M237 235h1M479 235h1M639 235h1M0 236h1M238 236h1M479 236h1M639 236h1M0 237h1M238 237h1M479 237h1M639 237h1M0 238h1M239 238h1M479 238h1M639 238h1M0 239h1M2 239h10M13 239h30M73 239h166M240 239h166M436 239h30M467 239h10M479 239h1M639 239h1M0 240h1M239 240h1M479 240h1M639 240h1M0 241h1M240 241h1M479 241h1M639 241h1M0 242h1M240 242h1M479 242h1M639 242h1M0 243h1M241 243h1M479 243h1M639 243h1M0 244h1M241 244h1M479 244h1M639 244h1M0 245h1M241 245h1M479 245h1M639 245h1M0 246h1M242 246h1M479 246h1M639 246h1M0 247h1M242 247h1M479 247h1M639 247h1M0 248h1M243 248h1M479 248h1M639 248h1M0 249h1M243 249h1M479 249h1M639 249h1M0 250h1M244 250h1M479 250h1M639 250h1M0 251h1M244 251h1M479 251h1M639 251h1M0 252h1M244 252h1M479 252h1M639 252h1M0 253h1M245 253h1M479 253h1M639 253h1M0 254h1M245 254h1M479 254h1M639 254h1M0 255h1M246 255h1M479 255h1M639 255h1M0 256h1M246 256h1M479 256h1M639 256h1M0 257h1M246 257h1M479 257h1M639 257h1M0 258h1M247 258h1M479 258h1M639 258h1M0 259h1M247 259h1M479 259h1M639 259h1M0 260h1M248 260h1M479 260h1M639 260h1M0 261h1M248 261h1M479 261h1M639 261h1M0 262h1M248 262h1M479 262h1M639 262h1M0 263h1M249 263h1M479 263h1M639 263h1M0 264h1M249 264h1M479 264h1M639 264h1M0 265h1M250 265h1M479 265h1M639 265h1M0 266h1M250 266h1M479 266h1M639 266h1M0 267h1M250 267h1M479 267h1M639 267h1M0 268h1M251 268h1M479 268h1M639 268h1M0 269h1M251 269h1M479 269h1M639 269h1M0 270h1M252 270h1M479 270h1M639 270h1M0 271h1M252 271h1M479 271h1M639 271h1M0 272h1M253 272h1M479 272h1M639 272h1M0 273h1M253 273h1M479 273h1M639 273h1M0 274h1M253 274h1M479 274h1M639 274h1M0 275h1M254 275h1M479 275h1M639 275h1M0 276h1M254 276h1M479 276h1M639 276h1M0 277h1M255 277h1M479 277h1M639 277h1M0 278h1M255 278h1M479 278h1M639 278h1M0 279h1M255 279h1M479 279h1M639 279h1M0 280h1M256 280h1M479 280h1M639 280h1M0 281h1M256 281h1M479 281h1M639 281h1M0 282h1M257 282h1M479 282h1M639 282h1M0 283h1M479 283h1M639 283h1M0 284h1M257 284h1M479 284h1M639 284h1M0 285h1M258 285h1M479 285h1M639 285h1M0 286h1M258 286h1M479 286h1M639 286h1M0 287h1M259 287h1M479 287h1M639 287h1M0 288h1M259 288h1M479 288h1M639 288h1M0 289h1M259 289h1M479 289h1M639 289h1M0 290h1M260 290h1M479 290h1M639 290h1M0 291h1M260 291h1M479 291h1M639 291h1M0 292h1M261 292h1M479 292h1M639 292h1M0 293h1M261 293h1M479 293h1M639 293h1M0 294h1M262 294h1M479 294h1M639 294h1M0 295h1M262 295h1M479 295h1M639 295h1M0 296h1M262 296h1M479 296h1M639 296h1M0 297h1M263 297h1M479 297h1M639 297h1M0 298h1M263 298h1M479 298h1M639 298h1M0 299h1M264 299h1M479 299h1M639 299h1M0 300h1M264 300h1M479 300h1M639 300h1M0 301h1M264 301h1M479 301h1M639 301h1M0 302h1M265 302h1M479 302h1M639 302h1M0 303h1M265 303h1M479 303h1M639 303h1M0 304h1M266 304h1M479 304h1M639 304h1M0 305h1M266 305h1M479 305h1M639 305h1M0 306h1M266 306h1M479 306h1M639 306h1M0 307h1M267 307h1M479 307h1M639 307h1M0 308h1M267 308h1M479 308h1M639 308h1M0 309h1M268 309h1M479 309h1M639 309h1M0 310h1M268 310h1M479 310h1M639 310h1M0 311h1M268 311h1M479 311h1M639 311h1M0 312h1M269 312h1M479 312h1M639 312h1M0 313h1M269 313h1M479 313h1M639 313h1M0 314h1M270 314h1M479 314h1M639 314h1M0 315h1M270 315h1M479 315h1M639 315h1M0 316h1M271 316h1M479 316h1M639 316h1M0 317h1M271 317h1M479 317h1M639 317h1M0 318h1M271 318h1M479 318h1M639 318h1M0 319h1M272 319h1M479 319h1M639 319h1M0 320h1M272 320h1M479 320h1M639 320h1M0 321h1M273 321h1M479 321h1M639 321h1M0 322h1M273 322h1M479 322h1M639 322h1M0 323h1M273 323h1M479 323h1M639 323h1M0 324h1M274 324h1M479 324h1M639 324h1M0 325h1M274 325h1M479 325h1M639 325h1M0 326h1M275 326h1M479 326h1M639 326h1M0 327h1M275 327h1M479 327h1M639 327h1M0 328h1M275 328h1M479 328h1M639 328h1M0 329h1M276 329h1M479 329h1M639 329h1M0 330h1M276 330h1M479 330h1M639 330h1M0 331h1M277 331h1M479 331h1M639 331h1M0 332h1M277 332h1M479 332h1M639 332h1M0 333h1M277 333h1M479 333h1M639 333h1M0 334h1M278 334h1M479 334h1M639 334h1M0 335h1M278 335h1M479 335h1M639 335h1M0 336h1M279 336h1M479 336h1M639 336h1M0 337h1M279 337h1M479 337h1M639 337h1M0 338h1M280 338h1M479 338h1M639 338h1M0 339h1M280 339h1M479 339h1M639 339h1M0 340h1M280 340h1M479 340h1M639 340h1M0 341h1M281 341h1M479 341h1M639 341h1M0 342h1M281 342h1M479 342h1M639 342h1M0 343h1M282 343h1M479 343h1M639 343h1M0 344h1M282 344h1M479 344h1M639 344h1M0 345h1M282 345h1M479 345h1M639 345h1M0 346h1M283 346h1M479 346h1M639 346h1M0 347h1M283 347h1M479 347h1M639 347h1M0 348h1M284 348h1M479 348h1M639 348h1M0 349h1M284 349h1M479 349h1M639 349h1M0 350h1M284 350h1M479 350h1M639 350h1M0 351h1M285 351h1M479 351h1M639 351h1M0 352h1M285 352h1M479 352h1M639 352h1M0 353h1M286 353h1M479 353h1M639 353h1M0 354h1M286 354h1M479 354h1M639 354h1M0 355h1M286 355h1M479 355h1M639 355h1M0 356h1M287 356h1M479 356h1M639 356h1M0 357h1M287 357h1M479 357h1M639 357h1M0 358h1M288 358h1M479 358h1M639 358h1M0 359h1M288 359h1M479 359h1M639 359h1M0 360h1M289 360h1M479 360h1M639 360h1M0 361h1M289 361h1M479 361h1M639 361h1M0 362h1M289 362h1M479 362h1M639 362h1M0 363h1M290 363h1M479 363h1M639 363h1M0 364h1M290 364h1M479 364h1M639 364h1M0 365h1M291 365h1M479 365h1M639 365h1M0 366h1M291 366h1M479 366h1M639 366h1M0 367h1M291 367h1M479 367h1M639 367h1M0 368h1M292 368h1M479 368h1M639 368h1M0 369h1M292 369h1M479 369h1M639 369h1M0 370h1M293 370h1M479 370h1M639 370h1M0 371h1M293 371h1M479 371h1M639 371h1M0 372h1M293 372h1M479 372h1M639 372h1M0 373h1M294 373h1M479 373h1M639 373h1M0 374h1M294 374h1M479 374h1M639 374h1M0 375h1M295 375h1M479 375h1M639 375h1M0 376h1M295 376h1M479 376h1M639 376h1M0 377h1M295 377h1M479 377h1M639 377h1M0 378h1M296 378h1M479 378h1M639 378h1M0 379h1M296 379h1M479 379h1M639 379h1M0 380h1M297 380h1M479 380h1M639 380h1M0 381h1M297 381h1M479 381h1M639 381h1M0 382h1M298 382h1M479 382h1M639 382h1M0 383h1M298 383h1M479 383h1M639 383h1M0 384h1M298 384h1M479 384h1M639 384h1M0 385h1M299 385h1M479 385h1M639 385h1M0 386h1M299 386h1M479 386h1M639 386h1M0 387h1M300 387h1M479 387h1M639 387h1M0 388h1M300 388h1M479 388h1M639 388h1M0 389h1M300 389h1M479 389h1M639 389h1M0 390h1M301 390h1M479 390h1M639 390h1M0 391h1M301 391h1M479 391h1M639 391h1M0 392h1M302 392h1M479 392h1M639 392h1M0 393h1M302 393h1M479 393h1M639 393h1M0 394h1M479 394h1M639 394h1M0 395h1M303 395h1M479 395h1M639 395h1M0 396h1M479 396h1M639 396h1M0 397h1M304 397h1M479 397h1M639 397h1M0 398h1M479 398h1M639 398h1M0 399h1M479 399h1M639 399h1M0 400h1M305 400h1M479 400h1M639 400h1M0 401h1M479 401h1M639 401h1M0 402h1M306 402h1M479 402h1M639 402h1M0 403h1M479 403h1M639 403h1M0 404h1M307 404h1M479 404h1M639 404h1M0 405h1M479 405h1M639 405h1M0 406h1M479 406h1M639 406h1M0 407h1M308 407h1M479 407h1M639 407h1M0 408h1M479 408h1M639 408h1M0 409h1M309 409h1M479 409h1M639 409h1M0 410h1M479 410h1M639 410h1M0 411h1M479 411h1M639 411h1M0 412h1M310 412h1M479 412h1M639 412h1M0 413h1M310 413h1M479 413h1M639 413h1M0 414h1M311 414h1M479 414h1M639 414h1M0 415h1M311 415h1M479 415h1M639 415h1M0 416h1M311 416h1M479 416h1M639 416h1M0 417h1M312 417h1M479 417h1M639 417h1M0 418h1M312 418h1M479 418h1M639 418h1M0 419h1M313 419h1M479 419h1M639 419h1M0 420h1M479 420h1M639 420h1M0 421h1M313 421h1M479 421h1M639 421h1M0 422h1M314 422h1M479 422h1M639 422h1M0 423h1M314 423h1M479 423h1M639 423h1M0 424h1M315 424h1M479 424h1M639 424h1M0 425h1M315 425h1M479 425h1M639 425h1M0 426h1M316 426h1M479 426h1M639 426h1M0 427h1M316 427h1M479 427h1M639 427h1M0 428h1M316 428h1M479 428h1M639 428h1M0 429h1M317 429h1M479 429h1M639 429h1M0 430h1M317 430h1M479 430h1M639 430h1M0 431h1M318 431h1M479 431h1M639 431h1M0 432h1M479 432h1M639 432h1M0 433h1M318 433h1M479 433h1M639 433h1M0 434h1M319 434h1M479 434h1M639 434h1M0 435h1M319 435h1M479 435h1M639 435h1M0 436h1M320 436h1M479 436h1M639 436h1M0 437h1M479 437h1M639 437h1M0 438h1M479 438h1M639 438h1M0 439h1M321 439h1M479 439h1M639 439h1M0 440h1M321 440h1M479 440h1M639 440h1M0 441h1M322 441h1M479 441h1M639 441h1M0 442h1M322 442h1M479 442h1M639 442h1M0 443h1M322 443h1M479 443h1M639 443h1M0 444h1M323 444h1M479 444h1M639 444h1M0 445h1M323 445h1M479 445h1M639 445h1M0 446h1M324 446h1M479 446h1M639 446h1M0 447h1M324 447h1M479 447h1M639 447h1M0 448h1M325 448h1M479 448h1M639 448h1M0 449h1M479 449h1M639 449h1M0 450h1M325 450h1M479 450h1M639 450h1M0 451h1M326 451h1M479 451h1M639 451h1M0 452h1M326 452h1M479 452h1M639 452h1M0 453h1M327 453h1M479 453h1M639 453h1M0 454h1M327 454h1M479 454h1M639 454h1M0 455h1M327 455h1M479 455h1M639 455h1M0 456h1M328 456h1M479 456h1M639 456h1M0 457h1M328 457h1M479 457h1M639 457h1M0 458h1M329 458h1M479 458h1M639 458h1M0 459h1M329 459h1M479 459h1M639 459h1M0 460h1M479 460h1M639 460h1M0 461h1M479 461h1M639 461h1M0 462h1M479 462h1M639 462h1M0 463h1M479 463h1M639 463h1M0 464h1M479 464h1M639 464h1M0 465h1M479 465h1M639 465h1M0 466h1M479 466h1M639 466h1M0 467h1M479 467h1M639 467h1M0 468h1M479 468h1M639 468h1M0 469h1M479 469h1M639 469h1M0 470h1M479 470h1M639 470h1M0 471h1M479 471h1M639 471h1M0 472h1M479 472h1M639 472h1M0 473h1M479 473h1M639 473h1M0 474h1M479 474h1M639 474h1M0 475h1M479 475h1M639 475h1M0 476h1M479 476h1M639 476h1M0 477h1M479 477h1M639 477h1M0 478h1M479 478h1M639 478h1M0 479h640"/>
<path stroke="#7F7F7F" d="M223 44h1M227 44h1M230 44h1M233 44h1M239 44h1M243 44h1M246 44h1M249 44h1M216 45h1M223 45h1M227 45h1M230 45h1M233 45h1M239 45h1M243 45h1M246 45h1M249 45h1M256 45h1M260 45h1M210 46h1M213 46h1M216 46h1M223 46h1M227 46h1M230 46h1M233 46h1M239 46h1M243 46h1M246 46h1M249 46h1M256 46h1M260 46h1M263 46h1M266 46h1M206 47h1M210 47h1M213 47h1M216 47h1M223 47h1M227 47h1M230 47h1M233 47h1M239 47h1M243 47h1M246 47h1M249 47h1M256 47h1M260 47h1M263 47h1M266 47h1M273 47h1M200 48h1M206 48h1M210 48h1M213 48h1M216 48h1M223 48h1M227 48h1M230 48h1M234 48h1M239 48h1M242 48h1M246 48h1M249 48h1M256 48h1M260 48h1M263 48h1M266 48h1M273 48h1M277 48h1M280 48h1M196 49h1M200 49h1M207 49h1M210 49h1M213 49h1M217 49h1M224 49h1M227 49h1M230 49h1M234 49h1M239 49h1M242 49h1M246 49h1M249 49h1M256 49h1M259 49h1M262 49h1M266 49h1M273 49h1M277 49h1M280 49h1M283 49h1M193 50h1M196 50h1M200 50h1M207 50h1M211 50h1M214 50h1M217 50h1M224 50h1M227 50h1M230 50h1M234 50h1M239 50h1M242 50h1M246 50h1M249 50h1M256 50h1M259 50h1M262 50h1M265 50h1M273 50h1M276 50h1M279 50h1M283 50h1M190 51h1M194 51h1M197 51h1M200 51h1M207 51h1M211 51h1M214 51h1M217 51h1M224 51h1M227 51h1M230 51h1M234 51h1M239 51h1M242 51h1M246 51h1M249 51h1M256 51h1M259 51h1M262 51h1M265 51h1M272 51h1M276 51h1M279 51h1M282 51h1M290 51h1M191 52h1M194 52h1M197 52h1M201 52h1M207 52h1M211 52h1M214 52h1M217 52h1M224 52h1M227 52h1M230 52h1M234 52h1M239 52h1M242 52h1M246 52h1M249 52h1M256 52h1M259 52h1M262 52h1M265 52h1M272 52h1M276 52h1M279 52h1M282 52h1M290 52h1M293 52h1M183 53h1M191 53h1M194 53h1M197 53h1M201 53h1M208 53h1M211 53h1M214 53h1M217 53h1M256 53h1M259 53h1M262 53h1M265 53h1M272 53h1M276 53h1M279 53h1M282 53h1M289 53h1M293 53h1M296 53h1M180 54h1M184 54h1M191 54h1M194 54h1M197 54h1M201 54h1M208 54h1M211 54h1M214 54h1M265 54h1M272 54h1M275 54h1M278 54h1M282 54h1M289 54h1M292 54h1M296 54h1M300 54h1M176 55h1M181 55h1M184 55h1M191 55h1M195 55h1M198 55h1M201 55h1M208 55h1M272 55h1M275 55h1M278 55h1M281 55h1M289 55h1M292 55h1M295 55h1M300 55h1M173 56h1M177 56h1M181 56h1M184 56h1M192 56h1M195 56h1M198 56h1M201 56h1M275 56h1M278 56h1M281 56h1M289 56h1M292 56h1M295 56h1M299 56h1M306 56h1M174 57h1M177 57h1M181 57h1M184 57h1M192 57h1M195 57h1M198 57h1M281 57h1M288 57h1M292 57h1M295 57h1M299 57h1M306 57h1M309 57h1M167 58h1M174 58h1M178 58h1M181 58h1M185 58h1M192 58h1M288 58h1M291 58h1M295 58h1M298 58h1M305 58h1M309 58h1M164 59h1M167 59h1M175 59h1M178 59h1M182 59h1M185 59h1M288 59h1M291 59h1M294 59h1M298 59h1M305 59h1M308 59h1M312 59h1M161 60h1M164 60h1M168 60h1M175 60h1M178 60h1M182 60h1M185 60h1M294 60h1M297 60h1M304 60h1M308 60h1M312 60h1M316 60h1M161 61h1M165 61h1M168 61h1M175 61h1M179 61h1M182 61h1M297 61h1M304 61h1M307 61h1M311 61h1M315 61h1M157 62h1M162 62h1M165 62h1M169 62h1M176 62h1M179 62h1M304 62h1M307 62h1M311 62h1M315 62h1M158 63h1M162 63h1M166 63h1M169 63h1M176 63h1M303 63h1M307 63h1M310 63h1M314 63h1M321 63h1M158 64h1M163 64h1M166 64h1M170 64h1M303 64h1M306 64h1M310 64h1M314 64h1M321 64h1M325 64h1M151 65h1M159 65h1M163 65h1M166 65h1M170 65h1M306 65h1M309 65h1M313 65h1M320 65h1M324 65h1M148 66h1M152 66h1M159 66h1M163 66h1M167 66h1M309 66h1M313 66h1M320 66h1M324 66h1M327 66h1M149 67h1M152 67h1M160 67h1M164 67h1M167 67h1M312 67h1M319 67h1M323 67h1M327 67h1M331 67h1M145 68h1M149 68h1M153 68h1M160 68h1M164 68h1M319 68h1M323 68h1M326 68h1M330 68h1M146 69h1M150 69h1M153 69h1M161 69h1M318 69h1M322 69h1M326 69h1M330 69h1M142 70h1M146 70h1M150 70h1M154 70h1M318 70h1M322 70h1M325 70h1M329 70h1M337 70h1M143 71h1M147 71h1M151 71h1M154 71h1M321 71h1M325 71h1M329 71h1M336 71h1M143 72h1M147 72h1M151 72h1M155 72h1M324 72h1M328 72h1M336 72h1M340 72h1M136 73h1M144 73h1M148 73h1M152 73h1M324 73h1M328 73h1M335 73h1M339 73h1M137 74h1M144 74h1M148 74h1M152 74h1M327 74h1M335 74h1M339 74h1M343 74h1M134 75h1M137 75h1M145 75h1M149 75h1M259 75h1M334 75h1M338 75h1M342 75h1M135 76h1M138 76h1M145 76h1M334 76h1M338 76h1M342 76h1M346 76h1M131 77h1M135 77h1M139 77h1M146 77h1M259 77h1M333 77h1M337 77h1M341 77h1M345 77h1M132 78h1M136 78h1M140 78h1M337 78h1M340 78h1M345 78h1M128 79h1M132 79h1M136 79h1M140 79h1M258 79h1M336 79h1M339 79h1M344 79h1M129 80h1M133 80h1M137 80h1M141 80h1M339 80h1M343 80h1M351 80h1M130 81h1M133 81h1M137 81h1M258 81h1M338 81h1M342 81h1M350 81h1M131 82h1M134 82h1M138 82h1M342 82h1M350 82h1M354 82h1M131 83h1M134 83h1M258 83h1M341 83h1M349 83h1M353 83h1M123 84h1M132 84h1M135 84h1M348 84h1M352 84h1M357 84h1M120 85h1M124 85h1M133 85h1M258 85h1M348 85h1M351 85h1M356 85h1M121 86h1M125 86h1M347 86h1M351 86h1M355 86h1M117 87h1M122 87h1M125 87h1M257 87h1M350 87h1M354 87h1M359 87h1M118 88h1M123 88h1M126 88h1M349 88h1M354 88h1M358 88h1M114 89h1M119 89h1M123 89h1M127 89h1M257 89h1M353 89h1M357 89h1M115 90h1M120 90h1M124 90h1M352 90h1M357 90h1M365 90h1M116 91h1M120 91h1M125 91h1M257 91h1M356 91h1M364 91h1M117 92h1M121 92h1M355 92h1M363 92h1M367 92h1M118 93h1M122 93h1M257 93h1M362 93h1M366 93h1M109 94h1M119 94h1M362 94h1M365 94h1M110 95h1M120 95h1M256 95h1M361 95h1M364 95h1M370 95h1M107 96h1M111 96h1M360 96h1M364 96h1M369 96h1M108 97h1M112 97h1M256 97h1M363 97h1M368 97h1M373 97h1M104 98h1M109 98h1M113 98h1M362 98h1M367 98h1M372 98h1M105 99h1M110 99h1M114 99h1M256 99h1M366 99h1M371 99h1M106 100h1M110 100h1M115 100h1M365 100h1M370 100h1M102 101h1M107 101h1M111 101h1M256 101h1M364 101h1M369 101h1M103 102h1M108 102h1M112 102h1M368 102h1M377 102h1M104 103h1M109 103h1M255 103h1M367 103h1M376 103h1M105 104h1M110 104h1M375 104h1M380 104h1M97 105h1M106 105h1M255 105h1M374 105h1M379 105h1M98 106h1M107 106h1M373 106h1M378 106h1M99 107h1M255 107h1M372 107h1M377 107h1M382 107h1M95 108h1M100 108h1M376 108h1M381 108h1M96 109h1M101 109h1M255 109h1M375 109h1M379 109h2M384 109h1M97 110h1M102 110h1M374 110h1M378 110h1M383 110h1M92 111h1M98 111h1M103 111h1M255 111h1M377 111h1M382 111h1M93 112h1M99 112h1M376 112h1M381 112h1M90 113h1M94 113h1M100 113h1M254 113h1M380 113h1M91 114h1M95 114h2M101 114h1M379 114h1M389 114h1M92 115h1M97 115h1M254 115h1M378 115h1M388 115h1M93 116h2M98 116h1M387 116h1M95 117h1M254 117h1M386 117h1M391 117h1M96 118h1M385 118h1M390 118h1M87 119h1M254 119h1M384 119h1M388 119h2M88 120h1M383 120h1M387 120h1M393 120h1M84 121h1M89 121h2M253 121h1M386 121h1M392 121h1M85 122h1M91 122h1M121 122h1M385 122h1M390 122h2M86 123h1M92 123h1M253 123h1M389 123h1M394 123h1M82 124h1M87 124h2M123 124h1M388 124h1M392 124h2M83 125h1M89 125h1M253 125h1M359 125h1M387 125h1M391 125h1M84 126h1M90 126h1M125 126h1M390 126h1M80 127h1M85 127h2M253 127h1M357 127h1M389 127h1M81 128h2M87 128h1M127 128h1M399 128h1M83 129h1M88 129h1M252 129h1M355 129h1M398 129h1M84 130h2M129 130h1M396 130h2M86 131h1M252 131h1M353 131h1M395 131h1M401 131h1M76 132h1M131 132h1M394 132h1M399 132h2M77 133h2M252 133h1M351 133h1M393 133h1M397 133h2M79 134h1M133 134h1M349 134h1M395 134h2M403 134h1M74 135h1M80 135h1M252 135h1M394 135h1M401 135h2M75 136h2M81 136h2M135 136h1M347 136h1M399 136h2M405 136h1M77 137h1M83 137h1M251 137h1M397 137h2M403 137h2M72 138h1M78 138h1M137 138h1M345 138h1M396 138h1M402 138h1M73 139h2M79 139h2M251 139h1M401 139h1M75 140h2M81 140h1M139 140h1M343 140h1M399 140h2M70 141h1M77 141h2M251 141h1M398 141h1M71 142h2M79 142h1M141 142h1M341 142h1M408 142h1M73 143h2M251 143h1M406 143h2M75 144h2M143 144h1M339 144h1M404 144h2M77 145h1M250 145h1M402 145h2M410 145h1M145 146h1M337 146h1M401 146h1M408 146h2M67 147h1M250 147h1M406 147h2M68 148h2M147 148h1M335 148h1M404 148h2M411 148h2M70 149h2M250 149h1M403 149h1M409 149h2M65 150h1M72 150h2M149 150h1M333 150h1M407 150h2M66 151h2M74 151h1M250 151h1M405 151h2M413 151h1M68 152h2M151 152h1M331 152h1M404 152h1M411 152h2M64 153h1M70 153h2M249 153h1M329 153h1M409 153h2M65 154h2M72 154h2M153 154h1M407 154h2M67 155h2M249 155h1M327 155h1M406 155h1M69 156h2M155 156h1M63 157h2M71 157h1M249 157h1M325 157h1M416 157h1M65 158h2M157 158h1M414 158h2M67 159h2M249 159h1M323 159h1M412 159h2M69 160h2M159 160h1M410 160h2M248 161h1M321 161h1M409 161h1M417 161h2M60 162h1M161 162h1M414 162h3M61 163h2M248 163h1M319 163h1M412 163h2M63 164h2M163 164h1M410 164h2M418 164h2M58 165h1M65 165h2M248 165h1M317 165h1M415 165h3M59 166h2M67 166h1M165 166h1M413 166h2M61 167h2M248 167h1M315 167h1M411 167h2M419 167h2M63 168h2M167 168h1M417 168h2M57 169h2M65 169h2M247 169h1M313 169h1M415 169h2M59 170h2M169 170h1M413 170h2M61 171h3M247 171h1M311 171h1M56 172h2M64 172h2M171 172h1M309 172h1M58 173h2M87 173h1M247 173h1M422 173h1M60 174h3M89 174h1M173 174h1M307 174h1M419 174h3M63 175h1M91 175h1M247 175h1M417 175h2M93 176h1M175 176h1M305 176h1M415 176h2M423 176h1M95 177h1M247 177h1M420 177h3M54 178h2M97 178h1M177 178h1M303 178h1M418 178h2M56 179h2M99 179h1M101 179h1M246 179h1M416 179h2M58 180h2M103 180h1M179 180h1M301 180h1M423 180h2M60 181h2M105 181h1M181 181h1M246 181h1M419 181h4M53 182h2M107 182h1M299 182h1M417 182h2M55 183h4M109 183h1M183 183h1M246 183h1M424 183h2M59 184h2M111 184h1M297 184h1M420 184h4M52 185h2M113 185h1M185 185h1M246 185h1M418 185h2M54 186h4M115 186h1M117 186h1M295 186h1M58 187h2M119 187h1M187 187h1M245 187h1M51 188h2M121 188h1M293 188h1M53 189h4M123 189h1M189 189h1M245 189h1M57 190h3M125 190h1M291 190h1M426 190h2M127 191h1M191 191h1M245 191h1M289 191h1M422 191h4M129 192h1M131 192h1M420 192h2M133 193h1M193 193h1M245 193h1M287 193h1M427 193h2M135 194h1M423 194h4M49 195h2M137 195h1M195 195h1M244 195h1M285 195h1M421 195h2M51 196h4M139 196h1M427 196h3M55 197h3M141 197h1M197 197h1M244 197h1M283 197h1M423 197h4M48 198h2M143 198h1M145 198h1M421 198h2M50 199h4M147 199h1M199 199h1M244 199h1M281 199h1M54 200h3M149 200h1M426 200h5M48 201h2M151 201h1M201 201h1M244 201h1M279 201h1M422 201h4M50 202h4M153 202h1M54 203h3M155 203h1M203 203h1M243 203h1M277 203h1M157 204h1M159 204h1M47 205h4M161 205h1M205 205h1M243 205h1M275 205h1M51 206h5M163 206h1M429 206h3M165 207h1M207 207h1M243 207h1M273 207h1M425 207h4M167 208h1M423 208h2M169 209h1M209 209h1M243 209h1M271 209h1M171 210h1M269 210h1M428 210h5M173 211h1M175 211h1M211 211h1M242 211h1M424 211h4M46 212h4M177 212h1M267 212h1M50 213h5M179 213h1M213 213h1M242 213h1M428 213h5M181 214h1M265 214h1M424 214h4M46 215h3M183 215h1M215 215h1M242 215h1M49 216h5M185 216h1M263 216h1M429 216h5M187 217h1M189 217h1M217 217h1M242 217h1M425 217h4M45 218h4M191 218h1M261 218h1M49 219h5M193 219h1M219 219h1M241 219h1M195 220h1M259 220h1M197 221h1M221 221h1M241 221h1M45 222h9M199 222h1M257 222h1M201 223h1M203 223h1M223 223h1M241 223h1M430 223h5M205 224h1M255 224h1M426 224h4M207 225h1M225 225h1M241 225h1M209 226h1M253 226h1M211 227h1M227 227h1M240 227h1M426 227h9M213 228h1M251 228h1M44 229h9M215 229h1M229 229h1M240 229h1M249 229h1M217 230h1M219 230h1M426 230h9M221 231h1M231 231h1M240 231h1M247 231h1M44 232h9M223 232h1M225 233h1M233 233h1M240 233h1M245 233h1M430 233h5M227 234h1M426 234h4M44 235h4M229 235h1M235 235h1M239 235h1M243 235h1M48 236h5M231 236h1M233 236h1M235 237h1M237 237h1M239 237h1M241 237h1M237 238h1M44 239h9M239 239h1M426 239h9M241 240h1M237 241h1M239 241h1M241 241h1M243 241h1M245 242h1M247 242h1M426 242h4M235 243h1M239 243h1M243 243h1M249 243h1M430 243h5M48 244h5M251 244h1M44 245h4M233 245h1M238 245h1M245 245h1M253 245h1M255 246h1M426 246h9M231 247h1M238 247h1M247 247h1M257 247h1M44 248h9M259 248h1M261 248h1M229 249h1M238 249h1M249 249h1M263 249h1M426 249h9M227 250h1M265 250h1M44 251h9M238 251h1M251 251h1M267 251h1M225 252h1M269 252h1M237 253h1M253 253h1M271 253h1M49 254h4M223 254h1M273 254h1M44 255h5M237 255h1M255 255h1M275 255h1M277 255h1M221 256h1M279 256h1M355 256h1M425 256h9M237 257h1M257 257h1M281 257h1M357 257h1M361 257h1M219 258h1M283 258h1M363 258h1M365 258h1M237 259h1M259 259h1M285 259h1M376 259h3M425 259h4M217 260h1M287 260h1M379 260h4M429 260h5M49 261h5M236 261h1M261 261h1M289 261h1M291 261h1M45 262h4M215 262h1M293 262h1M425 262h4M236 263h1M263 263h1M295 263h1M429 263h4M50 264h5M213 264h1M297 264h1M46 265h4M236 265h1M265 265h1M299 265h1M424 265h4M211 266h1M301 266h1M428 266h5M50 267h5M236 267h1M267 267h1M303 267h1M305 267h1M46 268h4M209 268h1M307 268h1M207 269h1M235 269h1M269 269h1M309 269h1M53 270h3M311 270h1M49 271h4M205 271h1M235 271h1M271 271h1M313 271h1M47 272h2M315 272h1M423 272h4M203 273h1M235 273h1M273 273h1M317 273h1M427 273h5M319 274h1M321 274h1M201 275h1M235 275h1M275 275h1M323 275h1M422 275h2M325 276h1M424 276h4M52 277h5M199 277h1M234 277h1M277 277h1M327 277h1M428 277h3M48 278h4M329 278h1M422 278h2M197 279h1M234 279h1M279 279h1M331 279h1M424 279h4M55 280h3M333 280h1M335 280h1M428 280h3M51 281h4M195 281h1M234 281h1M281 281h1M337 281h1M421 281h2M49 282h2M339 282h1M423 282h4M55 283h3M193 283h1M234 283h1M283 283h1M341 283h1M427 283h3M51 284h4M343 284h1M50 285h1M191 285h1M233 285h1M285 285h1M345 285h1M56 286h3M347 286h1M349 286h1M52 287h4M189 287h1M233 287h1M287 287h1M351 287h1M51 288h1M187 288h1M353 288h1M419 288h2M233 289h1M289 289h1M355 289h1M421 289h4M185 290h1M357 290h1M425 290h3M233 291h1M291 291h1M359 291h1M419 291h2M183 292h1M361 292h1M363 292h1M421 292h4M58 293h3M232 293h1M293 293h1M365 293h1M425 293h2M54 294h4M181 294h1M367 294h1M418 294h2M53 295h1M232 295h1M295 295h1M369 295h1M420 295h4M59 296h3M179 296h1M371 296h1M424 296h2M55 297h4M232 297h1M297 297h1M373 297h1M417 297h2M54 298h1M177 298h1M299 298h1M375 298h1M419 298h2M61 299h2M232 299h1M377 299h1M379 299h1M421 299h2M58 300h3M175 300h1M301 300h1M381 300h1M423 300h2M56 301h2M231 301h1M383 301h1M55 302h1M62 302h2M173 302h1M303 302h1M385 302h1M59 303h3M231 303h1M387 303h1M414 303h2M57 304h2M171 304h1M305 304h1M389 304h1M416 304h2M56 305h1M231 305h1M391 305h1M418 305h3M169 306h1M307 306h1M413 306h2M421 306h2M167 307h1M231 307h1M415 307h2M64 308h2M309 308h1M417 308h3M62 309h2M165 309h1M231 309h1M412 309h1M420 309h2M60 310h2M311 310h1M413 310h2M58 311h2M66 311h2M163 311h1M230 311h1M415 311h2M63 312h3M313 312h1M411 312h1M417 312h2M61 313h2M161 313h1M230 313h1M412 313h2M419 313h1M59 314h2M67 314h2M315 314h1M414 314h2M64 315h3M159 315h1M230 315h1M416 315h2M62 316h2M317 316h1M418 316h1M61 317h1M69 317h1M157 317h1M230 317h1M67 318h2M319 318h1M408 318h1M65 319h2M155 319h1M229 319h1M409 319h2M63 320h2M321 320h1M411 320h2M62 321h1M153 321h1M229 321h1M407 321h1M413 321h2M323 322h1M408 322h2M415 322h1M72 323h1M151 323h1M229 323h1M410 323h2M70 324h2M325 324h1M405 324h1M412 324h2M68 325h2M149 325h1M229 325h1M406 325h2M414 325h1M66 326h2M73 326h2M147 326h1M327 326h1M408 326h2M65 327h1M71 327h2M228 327h1M404 327h1M410 327h2M69 328h2M145 328h1M329 328h1M405 328h2M412 328h1M67 329h2M75 329h1M228 329h1M407 329h2M73 330h2M143 330h1M331 330h1M409 330h2M71 331h2M228 331h1M411 331h1M69 332h2M77 332h1M141 332h1M333 332h1M68 333h1M75 333h2M228 333h1M401 333h1M73 334h2M139 334h1M335 334h1M402 334h2M71 335h2M227 335h1M404 335h2M70 336h1M137 336h1M337 336h1M399 336h1M406 336h2M80 337h1M227 337h1M400 337h2M408 337h1M78 338h2M135 338h1M339 338h1M397 338h1M402 338h2M77 339h1M227 339h1M398 339h2M404 339h2M76 340h1M82 340h1M133 340h1M341 340h1M400 340h1M406 340h1M74 341h2M80 341h2M227 341h1M395 341h1M401 341h1M73 342h1M78 342h2M131 342h1M343 342h1M396 342h2M402 342h2M76 343h2M84 343h1M226 343h1M398 343h1M404 343h1M75 344h1M82 344h2M129 344h1M345 344h1M399 344h1M80 345h2M85 345h1M127 345h1M226 345h1M400 345h2M78 346h2M84 346h1M347 346h1M402 346h1M77 347h1M82 347h2M125 347h1M226 347h1M392 347h1M81 348h1M349 348h1M393 348h2M80 349h1M123 349h1M226 349h1M390 349h1M395 349h1M79 350h1M351 350h1M391 350h1M396 350h2M89 351h1M121 351h1M225 351h1M392 351h1M398 351h1M88 352h1M353 352h1M388 352h1M393 352h2M86 353h2M91 353h1M119 353h1M225 353h1M389 353h1M395 353h1M85 354h1M90 354h1M355 354h1M390 354h1M396 354h1M84 355h1M88 355h2M225 355h1M386 355h1M391 355h2M87 356h1M93 356h1M357 356h1M387 356h1M393 356h1M86 357h1M92 357h1M225 357h1M388 357h1M394 357h1M85 358h1M90 358h2M95 358h1M389 358h2M89 359h1M94 359h1M224 359h1M391 359h1M88 360h1M93 360h1M382 360h1M87 361h1M92 361h1M224 361h1M383 361h1M91 362h1M380 362h1M384 362h1M90 363h1M100 363h1M224 363h1M381 363h1M385 363h2M89 364h1M99 364h1M377 364h1M382 364h1M387 364h1M98 365h1M224 365h1M378 365h1M383 365h2M388 365h1M97 366h1M102 366h1M379 366h1M385 366h1M96 367h1M101 367h1M223 367h1M375 367h1M380 367h1M386 367h1M95 368h1M99 368h2M104 368h1M376 368h1M381 368h1M94 369h1M98 369h1M103 369h1M223 369h1M377 369h1M382 369h1M97 370h1M102 370h1M378 370h1M383 370h1M96 371h1M101 371h1M106 371h1M223 371h1M379 371h1M100 372h1M105 372h1M371 372h1M380 372h1M99 373h1M104 373h1M223 373h1M372 373h1M381 373h1M98 374h1M103 374h1M368 374h1M373 374h1M102 375h1M111 375h1M223 375h1M369 375h1M374 375h1M101 376h1M110 376h1M366 376h1M370 376h1M375 376h1M109 377h1M114 377h1M222 377h1M367 377h1M371 377h1M376 377h1M108 378h1M113 378h1M363 378h1M368 378h1M372 378h1M107 379h1M112 379h1M222 379h1M364 379h1M369 379h1M373 379h1M106 380h1M111 380h1M116 380h1M365 380h1M369 380h1M374 380h1M105 381h1M110 381h1M115 381h1M222 381h1M366 381h1M370 381h1M109 382h1M114 382h1M118 382h1M367 382h1M371 382h1M108 383h1M113 383h1M117 383h1M222 383h1M358 383h1M368 383h1M113 384h1M116 384h1M359 384h1M369 384h1M112 385h1M115 385h1M221 385h1M356 385h1M360 385h1M111 386h1M115 386h1M123 386h1M357 386h1M361 386h1M114 387h1M122 387h1M221 387h1M353 387h1M358 387h1M362 387h1M113 388h1M121 388h1M126 388h1M354 388h1M359 388h1M363 388h1M120 389h1M125 389h1M221 389h1M351 389h1M355 389h1M359 389h1M364 389h1M120 390h1M124 390h1M129 390h1M352 390h1M356 390h1M360 390h1M119 391h1M123 391h1M128 391h1M221 391h1M353 391h1M356 391h1M361 391h1M123 392h1M127 392h1M131 392h1M354 392h1M357 392h1M122 393h1M126 393h1M130 393h1M220 393h1M345 393h1M354 393h1M358 393h1M121 394h1M126 394h1M130 394h1M343 394h1M346 394h1M355 394h1M125 395h1M129 395h1M137 395h1M220 395h1M344 395h1M347 395h1M124 396h1M128 396h1M136 396h1M340 396h1M344 396h1M348 396h1M128 397h1M136 397h1M140 397h1M220 397h1M341 397h1M345 397h1M348 397h1M127 398h1M135 398h1M139 398h1M337 398h1M341 398h1M345 398h1M349 398h1M134 399h1M139 399h1M142 399h1M220 399h1M338 399h1M342 399h1M346 399h1M350 399h1M133 400h1M138 400h1M141 400h1M338 400h1M342 400h1M346 400h1M133 401h1M137 401h1M141 401h1M145 401h1M219 401h1M332 401h1M339 401h1M343 401h1M347 401h1M132 402h1M136 402h1M140 402h1M144 402h1M333 402h1M340 402h1M343 402h1M136 403h1M140 403h1M144 403h1M219 403h1M329 403h1M333 403h1M341 403h1M344 403h1M135 404h1M139 404h1M143 404h1M151 404h1M326 404h1M330 404h1M334 404h1M341 404h1M139 405h1M143 405h1M150 405h1M154 405h1M327 405h1M330 405h1M334 405h1M342 405h1M138 406h1M142 406h1M150 406h1M153 406h1M323 406h1M327 406h1M331 406h1M335 406h1M142 407h1M149 407h1M153 407h1M157 407h1M324 407h1M328 407h1M331 407h1M335 407h1M141 408h1M149 408h1M152 408h1M156 408h1M160 408h1M324 408h1M328 408h1M332 408h1M336 408h1M148 409h1M152 409h1M156 409h1M159 409h1M317 409h1M325 409h1M329 409h1M332 409h1M148 410h1M151 410h1M155 410h1M159 410h1M314 410h1M318 410h1M325 410h1M329 410h1M333 410h1M147 411h1M151 411h1M155 411h1M158 411h1M166 411h1M311 411h1M314 411h1M318 411h1M326 411h1M330 411h1M150 412h1M154 412h1M158 412h1M165 412h1M169 412h1M311 412h1M315 412h1M319 412h1M326 412h1M150 413h1M154 413h1M157 413h1M165 413h1M168 413h1M172 413h1M308 413h1M312 413h1M315 413h1M319 413h1M327 413h1M153 414h1M157 414h1M164 414h1M168 414h1M172 414h1M308 414h1M312 414h1M316 414h1M320 414h1M156 415h1M164 415h1M167 415h1M171 415h1M175 415h1M302 415h1M309 415h1M313 415h1M316 415h1M320 415h1M163 416h1M167 416h1M171 416h1M174 416h1M299 416h1M302 416h1M309 416h1M313 416h1M316 416h1M321 416h1M163 417h1M166 417h1M170 417h1M174 417h1M181 417h1M296 417h1M299 417h1M303 417h1M310 417h1M313 417h1M317 417h1M162 418h1M166 418h1M170 418h1M173 418h1M181 418h1M184 418h1M293 418h1M296 418h1M300 418h1M303 418h1M310 418h1M314 418h1M165 419h1M170 419h1M173 419h1M180 419h1M184 419h1M187 419h1M190 419h1M293 419h1M297 419h1M300 419h1M304 419h1M311 419h1M314 419h1M165 420h1M169 420h1M173 420h1M180 420h1M183 420h1M187 420h1M190 420h1M286 420h1M294 420h1M297 420h1M301 420h1M304 420h1M311 420h1M169 421h1M172 421h1M179 421h1M183 421h1M186 421h1M189 421h1M197 421h1M280 421h1M283 421h1M286 421h1M294 421h1M297 421h1M301 421h1M304 421h1M172 422h1M179 422h1M183 422h1M186 422h1M189 422h1M197 422h1M200 422h1M203 422h1M277 422h1M280 422h1M283 422h1M287 422h1M294 422h1M297 422h1M301 422h1M305 422h1M178 423h1M183 423h1M186 423h1M189 423h1M196 423h1M200 423h1M203 423h1M206 423h1M270 423h1M277 423h1M281 423h1M284 423h1M287 423h1M294 423h1M298 423h1M302 423h1M178 424h1M182 424h1M186 424h1M189 424h1M196 424h1M199 424h1M202 424h1M206 424h1M213 424h1M264 424h1M267 424h1M270 424h1M277 424h1M281 424h1M284 424h1M287 424h1M295 424h1M298 424h1M182 425h1M185 425h1M188 425h1M196 425h1M199 425h1M202 425h1M206 425h1M213 425h1M216 425h1M219 425h1M222 425h1M261 425h1M264 425h1M267 425h1M271 425h1M277 425h1M281 425h1M284 425h1M287 425h1M295 425h1M185 426h1M188 426h1M196 426h1M199 426h1M202 426h1M206 426h1M213 426h1M216 426h1M219 426h1M222 426h1M229 426h1M232 426h1M236 426h1M239 426h1M244 426h1M248 426h1M251 426h1M254 426h1M261 426h1M264 426h1M267 426h1M271 426h1M278 426h1M281 426h1M284 426h1M288 426h1M188 427h1M195 427h1M199 427h1M202 427h1M205 427h1M213 427h1M216 427h1M219 427h1M222 427h1M229 427h1M232 427h1M236 427h1M239 427h1M244 427h1M248 427h1M251 427h1M254 427h1M261 427h1M264 427h1M267 427h1M271 427h1M278 427h1M282 427h1M285 427h1M288 427h1M195 428h1M198 428h1M201 428h1M205 428h1M212 428h1M216 428h1M219 428h1M222 428h1M229 428h1M232 428h1M236 428h1M239 428h1M244 428h1M248 428h1M251 428h1M254 428h1M261 428h1M265 428h1M268 428h1M271 428h1M278 428h1M282 428h1M285 428h1M195 429h1M198 429h1M201 429h1M205 429h1M212 429h1M215 429h1M218 429h1M222 429h1M229 429h1M232 429h1M236 429h1M239 429h1M244 429h1M248 429h1M251 429h1M254 429h1M262 429h1M265 429h1M268 429h1M272 429h1M278 429h1M282 429h1M198 430h1M201 430h1M205 430h1M212 430h1M215 430h1M218 430h1M222 430h1M229 430h1M232 430h1M235 430h1M239 430h1M245 430h1M248 430h1M251 430h1M255 430h1M262 430h1M265 430h1M268 430h1M272 430h1M278 430h1M205 431h1M212 431h1M215 431h1M218 431h1M222 431h1M229 431h1M232 431h1M235 431h1M239 431h1M245 431h1M248 431h1M251 431h1M255 431h1M262 431h1M265 431h1M268 431h1M272 431h1M212 432h1M215 432h1M218 432h1M222 432h1M229 432h1M232 432h1M235 432h1M239 432h1M245 432h1M248 432h1M251 432h1M255 432h1M262 432h1M265 432h1M268 432h1M218 433h1M222 433h1M229 433h1M232 433h1M235 433h1M239 433h1M245 433h1M248 433h1M251 433h1M255 433h1M262 433h1M229 434h1M232 434h1M235 434h1M239 434h1M245 434h1M248 434h1M251 434h1M255 434h1"/>
<path stroke="#FF0000" d="M242 58h1M215 59h3M236 59h2M241 59h1M214 60h1M218 60h1M238 60h1M241 60h1M214 61h1M218 61h1M238 61h1M241 61h1M214 62h1M218 62h1M237 62h1M241 62h1M215 63h4M237 63h1M241 63h1M218 64h1M236 64h1M241 64h1M218 65h1M236 65h8M214 66h1M218 66h1M241 66h1M215 67h3M97 81h1M91 82h2M96 82h1M93 83h1M96 83h1M93 84h1M96 84h1M92 85h1M96 85h1M92 86h1M96 86h1M91 87h1M96 87h1M91 88h8M96 89h1M79 97h5M82 98h2M81 99h1M83 99h1M80 100h1M83 100h1M79 101h1M83 101h1M78 102h1M69 103h1M77 103h1M70 104h1M76 104h1M71 105h1M75 105h1M72 106h1M74 106h1M73 107h1M72 108h1M74 108h1M71 109h1M75 109h1M70 110h1M76 110h1M69 111h1M77 111h1M68 112h1M67 113h1M435 156h5M434 157h1M440 157h1M433 158h1M441 158h1M432 159h1M442 159h1M431 160h1M443 160h1M431 161h1M443 161h1M431 162h1M443 162h1M431 163h1M443 163h1M431 164h1M443 164h1M432 165h1M442 165h1M433 166h1M441 166h1M433 167h1M441 167h1M429 168h1M433 168h1M441 168h1M430 169h1M432 169h1M442 169h1M431 170h1M443 170h1M444 171h1M445 172h1M625 186h1M628 186h1M630 186h2M445 187h3M624 187h2M628 187h2M632 187h1M443 188h2M448 188h2M625 188h1M627 188h1M629 188h1M632 188h1M443 189h1M449 189h1M625 189h1M627 189h1M630 189h2M442 190h1M450 190h1M625 190h1M627 190h1M631 190h1M442 191h1M446 191h1M450 191h1M626 191h1M632 191h1M442 192h1M450 192h1M626 192h1M632 192h1M443 193h1M449 193h1M626 193h1M632 193h1M443 194h2M448 194h2M631 194h1M445 195h3M625 226h1M632 226h1M626 227h6M627 228h1M630 228h1M627 229h1M630 229h1M627 230h1M630 230h1M627 231h1M630 231h1M627 232h1M630 232h1M626 233h6M625 234h1M632 234h1M368 249h1M367 250h1M357 251h2M366 251h1M359 252h1M366 252h1M341 253h1M360 253h1M366 253h1M340 254h3M360 254h1M366 254h1M399 254h1M341 255h1M360 255h1M366 255h1M398 255h1M359 256h1M366 256h1M388 256h2M397 256h1M359 257h1M366 257h1M390 257h1M397 257h1M358 258h1M366 258h1M372 258h1M391 258h1M397 258h1M358 259h1M366 259h1M371 259h3M391 259h1M397 259h1M357 260h1M366 260h1M372 260h1M391 260h1M397 260h1M357 261h1M366 261h1M390 261h1M397 261h1M356 262h1M366 262h1M390 262h1M397 262h1M356 263h15M389 263h1M397 263h1M366 264h1M389 264h1M397 264h1M366 265h1M388 265h1M397 265h1M388 266h1M397 266h1M387 267h1M397 267h1M67 268h3M387 268h15M627 268h3M68 269h2M397 269h1M626 269h1M630 269h1M67 270h1M69 270h1M397 270h1M626 270h1M630 270h1M63 271h2M66 271h1M624 271h4M629 271h4M62 272h1M65 272h1M61 273h1M66 273h1M624 273h9M61 274h1M66 274h1M62 275h1M65 275h1M63 276h2M149 287h1M148 288h3M149 289h1M133 290h6M137 291h2M136 292h1M138 292h1M135 293h1M138 293h1M134 294h1M138 294h1M133 295h1M138 295h1M125 296h5M132 296h1M124 297h1M130 297h2M123 298h1M131 298h1M122 299h1M132 299h1M74 300h1M122 300h1M132 300h1M73 301h2M122 301h1M132 301h1M72 302h1M74 302h1M121 302h2M132 302h1M159 302h1M74 303h1M120 303h3M132 303h1M158 303h3M74 304h1M121 304h1M123 304h1M131 304h1M159 304h1M74 305h1M105 305h6M124 305h1M130 305h1M74 306h1M109 306h2M125 306h5M74 307h1M108 307h1M110 307h1M72 308h5M107 308h1M110 308h1M106 309h1M110 309h1M140 309h5M105 310h1M110 310h1M138 310h2M145 310h2M97 311h5M104 311h1M137 311h1M147 311h1M96 312h1M102 312h2M136 312h1M148 312h1M95 313h1M103 313h1M135 313h1M149 313h1M94 314h1M104 314h1M135 314h1M149 314h1M94 315h1M104 315h1M134 315h1M150 315h1M94 316h1M104 316h1M134 316h1M150 316h1M627 316h3M94 317h1M104 317h1M134 317h1M142 317h1M150 317h1M625 317h2M630 317h2M94 318h1M104 318h1M134 318h1M150 318h1M625 318h1M631 318h1M95 319h1M103 319h1M134 319h1M150 319h1M624 319h1M632 319h1M96 320h1M102 320h1M135 320h1M149 320h1M624 320h1M628 320h1M632 320h1M97 321h5M135 321h1M149 321h1M624 321h1M632 321h1M134 322h1M136 322h1M148 322h1M625 322h1M631 322h1M133 323h3M137 323h1M147 323h1M625 323h2M630 323h2M134 324h1M138 324h2M145 324h2M627 324h3M140 325h5M116 328h5M114 329h2M121 329h2M113 330h1M123 330h1M112 331h1M124 331h1M111 332h1M125 332h1M111 333h1M125 333h1M110 334h1M126 334h1M384 334h5M110 335h1M126 335h1M384 335h1M110 336h1M118 336h1M126 336h1M384 336h1M110 337h1M126 337h1M384 337h1M110 338h1M126 338h1M384 338h4M111 339h1M125 339h1M388 339h1M111 340h1M125 340h1M388 340h1M112 341h1M124 341h1M384 341h1M388 341h1M113 342h1M123 342h1M385 342h3M114 343h2M121 343h2M116 344h5M375 347h3M373 348h2M378 348h2M373 349h1M379 349h1M372 350h1M380 350h1M372 351h1M376 351h1M380 351h1M372 352h1M380 352h1M373 353h1M379 353h1M373 354h2M378 354h2M375 355h3M630 356h3M631 357h2M630 358h1M632 358h1M626 359h2M629 359h1M625 360h1M628 360h1M624 361h1M629 361h1M624 362h1M629 362h1M625 363h1M628 363h1M626 364h2M631 366h1M625 367h2M630 367h1M627 368h1M630 368h1M627 369h1M630 369h1M626 370h1M630 370h1M626 371h1M630 371h1M625 372h1M630 372h1M625 373h8M630 374h1M180 438h3M181 439h2M180 440h1M182 440h1M176 441h2M179 441h1M199 441h3M209 441h3M175 442h1M178 442h1M198 442h1M202 442h1M208 442h1M212 442h1M174 443h1M179 443h1M197 443h1M203 443h1M207 443h1M213 443h1M174 444h1M179 444h1M197 444h1M203 444h1M207 444h1M213 444h1M175 445h1M178 445h1M197 445h1M203 445h1M207 445h1M213 445h1M176 446h2M198 446h1M204 446h1M206 446h1M212 446h1M199 447h1M204 447h1M206 447h1M211 447h1M204 448h1M206 448h1M204 449h1M206 449h1M205 450h1M205 451h1M205 452h1M205 453h1M205 454h1M205 455h1M205 456h1M205 457h1"/>
<path stroke="#FFFF00" d="M299 32h3M298 33h1M302 33h1M298 34h1M302 34h1M298 35h1M302 35h1M299 36h3M300 37h1M298 38h5M300 39h1M300 40h1M365 67h1M369 67h1M373 67h1M366 68h1M368 68h1M370 68h1M372 68h1M374 68h1M367 69h1M371 69h1M375 69h1M379 69h1M367 70h1M371 70h1M375 70h1M378 70h2M367 71h1M371 71h1M375 71h1M377 71h1M379 71h1M367 72h1M371 72h1M375 72h2M379 72h1M367 73h1M371 73h1M375 73h1M379 73h1M367 74h1M371 74h1M375 74h1M379 74h1M367 75h1M371 75h1M375 75h1M379 75h1M367 76h1M371 76h1M375 76h1M379 76h1M367 77h1M371 77h1M375 77h1M379 77h1M155 78h1M367 78h1M371 78h1M375 78h1M379 78h1M153 79h5M367 79h1M371 79h1M375 79h1M379 79h1M155 80h1M367 80h1M371 80h1M376 80h1M378 80h1M155 81h1M157 81h2M367 81h1M371 81h1M377 81h1M155 82h2M159 82h1M376 82h1M378 82h1M155 83h1M159 83h1M375 83h1M379 83h1M155 84h1M158 84h1M155 85h1M158 85h1M159 86h1M137 88h1M144 88h3M136 89h2M143 89h1M147 89h1M135 90h1M137 90h1M143 90h1M147 90h1M137 91h1M143 91h1M147 91h1M137 92h1M143 92h1M147 92h1M137 93h1M143 93h1M147 93h1M137 94h1M143 94h1M147 94h1M137 95h1M143 95h1M147 95h1M135 96h5M144 96h3M35 174h1M33 175h5M35 176h1M35 177h1M37 177h2M35 178h2M39 178h1M35 179h1M39 179h1M35 180h1M38 180h1M35 181h1M38 181h1M39 182h1M624 196h1M632 196h1M23 197h1M29 197h1M33 197h3M625 197h1M631 197h1M22 198h2M29 198h2M32 198h1M36 198h1M626 198h1M630 198h1M21 199h1M23 199h1M29 199h1M31 199h1M37 199h1M626 199h1M630 199h1M23 200h1M28 200h1M30 200h1M37 200h1M624 200h9M23 201h1M27 201h1M31 201h1M37 201h1M626 201h1M630 201h1M23 202h1M27 202h1M32 202h1M36 202h1M412 202h3M626 202h1M630 202h1M23 203h1M27 203h1M33 203h3M411 203h1M415 203h1M625 203h1M631 203h1M23 204h1M27 204h1M34 204h1M411 204h1M415 204h1M624 204h1M632 204h1M23 205h1M27 205h1M35 205h1M411 205h1M415 205h1M24 206h1M26 206h1M36 206h1M412 206h3M25 207h1M37 207h1M413 207h1M25 208h1M37 208h1M411 208h5M25 209h1M37 209h1M413 209h1M25 210h1M37 210h1M413 210h1M25 211h1M37 211h1M36 212h1M35 213h1M627 237h3M625 238h2M630 238h2M624 239h1M629 239h1M632 239h1M625 240h2M629 240h1M632 240h1M624 241h1M627 241h1M630 241h2M624 242h1M627 242h1M632 242h1M625 243h2M630 243h2M627 244h3M142 256h1M412 271h3M411 272h1M415 272h1M411 273h1M411 274h1M411 275h4M411 276h1M415 276h1M624 276h1M626 276h1M628 276h1M411 277h1M415 277h1M625 277h1M627 277h1M629 277h1M411 278h1M415 278h1M625 278h1M627 278h1M629 278h1M412 279h3M625 279h1M627 279h1M629 279h1M625 280h1M627 280h1M629 280h1M625 281h1M627 281h1M629 281h1M625 282h1M627 282h1M629 282h1M632 282h1M625 283h1M627 283h1M629 283h1M632 283h1M630 284h2M163 300h1M176 314h1M173 316h1M172 317h3M173 318h1M185 321h1M293 321h1M154 324h5M153 325h1M159 325h1M152 326h1M160 326h1M152 327h1M160 327h1M152 328h1M160 328h1M152 329h1M160 329h1M200 329h1M152 330h1M160 330h1M153 331h1M159 331h1M154 332h5M198 332h1M156 333h1M197 333h3M156 334h1M198 334h1M156 335h1M152 336h9M156 337h1M239 337h1M156 338h1M156 339h1M152 340h1M156 340h1M151 341h3M152 342h1M627 346h3M626 347h1M630 347h1M626 348h1M630 348h1M135 349h5M626 349h1M630 349h1M134 350h1M140 350h1M201 350h1M627 350h3M133 351h1M141 351h1M201 351h1M628 351h1M133 352h1M141 352h1M197 352h9M626 352h5M133 353h1M141 353h1M201 353h1M628 353h1M133 354h1M141 354h1M201 354h1M628 354h1M133 355h1M141 355h1M201 355h1M134 356h1M140 356h1M201 356h1M205 356h3M135 357h5M201 357h1M204 357h1M208 357h1M137 358h1M201 358h3M209 358h1M137 359h1M201 359h1M209 359h1M137 360h1M201 360h1M209 360h1M133 361h9M186 361h1M201 361h1M208 361h1M137 362h1M185 362h3M201 362h1M207 362h1M137 363h1M186 363h1M201 363h1M207 363h1M137 364h1M201 364h1M207 364h1M137 365h1M208 365h1M209 366h1M627 376h1M132 377h3M625 377h5M131 378h1M135 378h1M627 378h1M131 379h1M135 379h1M189 379h1M627 379h1M629 379h2M131 380h1M135 380h1M189 380h1M627 380h2M631 380h1M132 381h3M185 381h9M627 381h1M631 381h1M133 382h1M189 382h1M627 382h1M630 382h1M131 383h5M189 383h1M627 383h1M630 383h1M133 384h1M189 384h1M631 384h1M133 385h1M189 385h1M193 385h3M189 386h1M192 386h1M196 386h1M189 387h3M197 387h1M189 388h1M197 388h1M189 389h1M197 389h1M189 390h1M196 390h1M189 391h1M195 391h1M189 392h1M195 392h1M158 393h3M189 393h1M195 393h1M157 394h1M161 394h1M196 394h1M161 395h1M197 395h1M161 396h1M160 397h1M159 398h1M158 399h1M157 400h1M157 401h5M308 429h1M320 429h1M309 430h1M319 430h1M309 431h1M319 431h1M310 432h2M317 432h2M312 433h5M311 434h1M317 434h1M310 435h1M318 435h1M309 436h1M319 436h1M308 437h1M320 437h1M308 438h1M320 438h1M308 439h1M320 439h1M308 440h1M320 440h1M308 441h1M320 441h1M286 442h3M309 442h1M319 442h1M285 443h1M289 443h1M310 443h1M318 443h1M285 444h1M289 444h1M311 444h1M317 444h1M285 445h1M289 445h1M312 445h5M286 446h3M287 447h1M285 448h5M287 449h1M287 450h1"/>
<path stroke="#00FF00" d="M271 25h5M270 26h1M276 26h1M269 27h1M277 27h1M269 28h1M277 28h1M269 29h1M277 29h1M270 30h1M276 30h1M265 31h7M275 31h7M265 35h17M391 90h1M395 90h1M392 91h3M391 92h1M395 92h1M391 93h1M395 93h1M391 94h1M395 94h1M392 95h3M393 96h1M391 97h5M393 98h1M99 123h1M105 123h1M100 124h1M104 124h1M100 125h1M102 125h1M104 125h1M100 126h5M100 127h1M102 127h1M104 127h1M99 128h1M102 128h1M105 128h1M101 129h3M101 130h1M103 130h1M102 131h1M88 136h1M96 136h1M87 137h2M95 137h2M86 138h1M88 138h1M94 138h1M96 138h1M88 139h1M96 139h1M88 140h1M96 140h1M88 141h1M96 141h1M88 142h1M96 142h1M88 143h1M96 143h1M86 144h5M94 144h5M402 170h5M406 171h1M406 172h1M405 173h1M404 174h1M403 175h1M402 176h1M402 177h1M402 178h1M625 206h2M630 206h2M624 207h1M627 207h1M629 207h1M632 207h1M624 208h1M627 208h1M629 208h1M632 208h1M625 209h1M627 209h1M629 209h1M631 209h1M628 210h1M628 211h1M628 212h1M628 213h1M628 214h1M627 247h3M625 248h2M630 248h2M624 249h1M629 249h1M632 249h1M625 250h2M629 250h1M632 250h1M624 251h1M627 251h1M630 251h2M624 252h1M627 252h1M632 252h1M335 253h2M625 253h2M630 253h2M333 254h1M627 254h3M330 255h1M332 255h1M327 256h1M329 256h1M326 257h1M323 258h2M320 259h2M317 260h2M314 261h2M312 262h1M309 263h1M311 263h1M306 264h1M308 264h1M305 265h1M302 266h2M299 267h2M296 268h2M293 269h2M291 270h1M288 271h1M290 271h1M285 272h1M287 272h1M284 273h1M281 274h2M278 275h2M275 276h2M272 277h2M270 278h1M267 279h1M269 279h1M264 280h1M266 280h1M263 281h1M260 282h2M29 283h1M35 283h1M257 283h2M30 284h1M34 284h1M254 284h2M30 285h1M32 285h1M34 285h1M251 285h2M30 286h5M249 286h1M630 286h3M30 287h1M32 287h1M34 287h1M246 287h1M248 287h1M631 287h2M29 288h1M32 288h1M35 288h1M243 288h1M245 288h1M630 288h1M632 288h1M31 289h3M242 289h1M406 289h1M410 289h1M625 289h1M629 289h1M31 290h1M33 290h1M239 290h2M407 290h3M626 290h1M628 290h1M32 291h1M236 291h2M406 291h1M410 291h1M627 291h1M233 292h2M406 292h1M410 292h1M626 292h1M628 292h1M230 293h2M406 293h1M410 293h1M625 293h1M629 293h1M228 294h1M407 294h3M624 294h1M225 295h1M227 295h1M408 295h1M222 296h1M224 296h1M406 296h5M221 297h1M408 297h1M218 298h2M215 299h2M212 300h2M209 301h2M207 302h1M204 303h1M206 303h1M201 304h1M203 304h1M200 305h1M37 306h1M43 306h1M49 306h1M197 306h2M36 307h2M42 307h2M48 307h1M194 307h2M36 308h1M38 308h1M42 308h1M44 308h1M48 308h1M191 308h2M35 309h1M38 309h1M41 309h1M44 309h1M47 309h1M188 309h2M34 310h1M38 310h1M40 310h1M44 310h1M46 310h1M186 310h1M34 311h1M39 311h2M45 311h2M183 311h1M185 311h1M33 312h1M39 312h1M45 312h1M180 312h1M182 312h1M179 313h1M177 314h1M37 316h1M43 316h1M49 316h1M36 317h2M42 317h2M48 317h1M36 318h1M38 318h1M42 318h1M44 318h1M48 318h1M35 319h1M38 319h1M41 319h1M44 319h1M47 319h1M34 320h1M38 320h1M40 320h1M44 320h1M46 320h1M34 321h1M39 321h2M45 321h2M33 322h1M39 322h1M45 322h1M182 324h1M295 324h1M181 325h3M294 325h3M182 326h1M295 326h1M166 335h1M174 335h1M301 335h1M313 335h1M167 336h1M173 336h1M302 336h1M312 336h1M626 336h1M630 336h1M168 337h5M303 337h1M311 337h1M627 337h3M167 338h1M173 338h1M303 338h1M311 338h1M626 338h1M630 338h1M166 339h1M174 339h1M303 339h1M307 339h1M311 339h1M626 339h1M630 339h1M166 340h1M174 340h1M303 340h1M307 340h1M311 340h1M626 340h1M630 340h1M166 341h1M174 341h1M303 341h9M627 341h3M166 342h1M174 342h1M303 342h1M307 342h1M311 342h1M628 342h1M166 343h1M174 343h1M303 343h1M307 343h1M311 343h1M626 343h5M167 344h1M173 344h1M302 344h1M307 344h1M312 344h1M628 344h1M168 345h5M301 345h1M307 345h1M313 345h1M170 346h1M307 346h1M170 347h1M306 347h3M170 348h1M305 348h1M309 348h1M166 349h9M305 349h1M309 349h1M165 350h1M170 350h1M305 350h1M309 350h1M313 350h1M164 351h3M170 351h1M306 351h3M312 351h3M165 352h1M313 352h1M150 361h1M158 361h1M318 361h1M330 361h1M151 362h1M157 362h1M319 362h1M329 362h1M152 363h5M320 363h1M328 363h1M151 364h1M157 364h1M320 364h1M328 364h1M150 365h1M158 365h1M320 365h1M324 365h1M328 365h1M397 365h1M411 365h1M150 366h1M158 366h1M320 366h1M324 366h1M328 366h1M398 366h1M410 366h1M150 367h1M158 367h1M320 367h9M399 367h11M150 368h1M158 368h1M320 368h1M324 368h1M328 368h1M401 368h1M407 368h1M150 369h1M158 369h1M320 369h1M324 369h1M328 369h1M401 369h1M407 369h1M151 370h1M157 370h1M319 370h1M324 370h1M329 370h1M401 370h1M407 370h1M152 371h5M318 371h1M324 371h1M330 371h1M401 371h1M407 371h1M154 372h1M324 372h1M401 372h1M407 372h1M154 373h1M323 373h3M401 373h1M407 373h1M154 374h1M322 374h1M326 374h1M401 374h1M407 374h1M150 375h9M322 375h1M326 375h1M401 375h1M407 375h1M154 376h1M322 376h1M326 376h1M401 376h1M407 376h1M154 377h1M323 377h3M401 377h1M407 377h1M401 378h1M407 378h1M399 379h11M398 380h1M410 380h1M397 381h1M411 381h1M625 386h1M631 386h1M626 387h1M630 387h1M626 388h1M628 388h1M630 388h1M382 389h1M386 389h1M626 389h5M383 390h3M626 390h1M628 390h1M630 390h1M382 391h1M386 391h1M625 391h1M628 391h1M631 391h1M382 392h1M386 392h1M627 392h3M382 393h1M386 393h1M627 393h1M629 393h1M383 394h3M628 394h1M384 395h1M382 396h5M384 397h1M261 411h3M237 412h1M241 412h1M260 412h1M264 412h1M238 413h3M264 413h1M237 414h1M241 414h1M264 414h1M237 415h1M241 415h1M262 415h2M237 416h1M241 416h1M264 416h1M238 417h3M264 417h1M239 418h1M260 418h1M264 418h1M237 419h5M261 419h3M239 420h1"/>
<path stroke="#0000FF" d="M188 28h1M191 28h1M194 28h1M188 29h1M190 29h1M192 29h1M194 29h1M188 30h1M191 30h1M194 30h1M189 31h1M193 31h1M190 32h3M156 33h1M160 33h1M164 33h1M191 33h1M157 34h1M159 34h1M161 34h1M163 34h1M165 34h1M189 34h5M158 35h1M162 35h1M166 35h1M191 35h1M158 36h1M162 36h1M166 36h1M191 36h1M158 37h1M162 37h1M166 37h1M158 38h1M162 38h1M166 38h1M158 39h1M162 39h1M166 39h1M158 40h1M162 40h1M166 40h1M158 41h1M162 41h1M166 41h1M158 42h1M162 42h1M166 42h1M158 43h1M162 43h1M166 43h1M158 44h1M162 44h1M166 44h1M171 44h1M158 45h1M162 45h1M166 45h1M170 45h3M158 46h1M162 46h1M166 46h1M171 46h1M158 47h1M162 47h1M166 47h1M171 47h1M167 48h1M170 48h1M168 49h2M318 77h3M317 78h1M321 78h1M317 79h1M321 79h1M317 80h1M321 80h1M318 81h3M317 82h1M321 82h1M317 83h1M321 83h1M317 84h1M321 84h1M318 85h3M342 93h1M345 93h1M348 93h1M342 94h1M344 94h1M346 94h1M348 94h1M342 95h1M345 95h1M348 95h1M343 96h1M347 96h1M344 97h3M345 98h1M343 99h5M345 100h1M345 101h1M67 181h1M70 181h1M73 181h1M66 182h2M69 182h3M73 182h2M67 183h1M70 183h1M73 183h1M68 184h1M70 184h1M72 184h1M69 185h3M70 186h1M68 187h5M70 188h1M70 189h1M61 199h1M68 199h3M60 200h2M67 200h1M71 200h1M59 201h1M61 201h1M71 201h1M61 202h1M71 202h1M61 203h1M70 203h1M61 204h1M69 204h1M61 205h1M68 205h1M61 206h1M67 206h1M59 207h5M67 207h5M625 216h1M631 216h1M626 217h1M630 217h1M627 218h3M626 219h1M630 219h1M625 220h1M631 220h1M625 221h1M631 221h1M625 222h1M631 222h1M626 223h1M630 223h1M627 224h3M110 252h1M115 252h3M122 252h1M110 253h1M114 253h1M118 253h1M122 253h1M110 254h1M114 254h1M118 254h1M122 254h1M110 255h1M114 255h1M118 255h1M122 255h1M110 256h1M115 256h3M122 256h1M138 256h1M624 256h1M626 256h1M628 256h1M111 257h1M121 257h1M137 257h3M625 257h1M627 257h1M629 257h1M631 257h1M80 258h1M85 258h3M92 258h1M111 258h1M121 258h1M138 258h1M625 258h1M627 258h1M629 258h3M80 259h1M84 259h1M88 259h1M92 259h1M112 259h2M119 259h2M625 259h1M627 259h1M629 259h1M631 259h1M80 260h1M84 260h1M88 260h1M92 260h1M114 260h5M625 260h1M627 260h1M629 260h1M631 260h1M80 261h1M84 261h1M88 261h1M92 261h1M107 261h1M116 261h1M625 261h1M627 261h1M629 261h1M631 261h1M80 262h1M85 262h3M92 262h1M106 262h3M116 262h1M625 262h1M627 262h1M629 262h1M631 262h1M81 263h1M91 263h1M107 263h1M116 263h1M625 263h1M627 263h1M630 263h1M81 264h1M91 264h1M112 264h9M629 264h1M631 264h1M82 265h2M89 265h2M116 265h1M84 266h5M116 266h1M447 266h5M86 267h1M116 267h1M444 267h3M452 267h1M86 268h1M116 268h1M443 268h1M453 268h3M86 269h1M442 269h1M452 269h1M456 269h1M82 270h9M441 270h1M451 270h1M457 270h1M86 271h1M451 271h1M457 271h1M86 272h1M443 272h3M451 272h1M457 272h1M86 273h1M442 273h1M446 273h1M452 273h1M456 273h1M86 274h1M441 274h1M447 274h1M453 274h3M441 275h1M447 275h1M441 276h1M447 276h1M457 276h1M442 277h1M446 277h1M456 277h1M443 278h3M455 278h1M446 279h1M452 279h3M447 280h5M440 296h3M625 296h1M628 296h1M630 296h2M439 297h1M443 297h2M624 297h2M628 297h2M632 297h1M440 298h1M444 298h1M625 298h1M627 298h1M629 298h1M632 298h1M441 299h1M445 299h1M625 299h1M627 299h1M630 299h2M441 300h1M445 300h1M625 300h1M627 300h1M631 300h1M441 301h1M445 301h1M626 301h1M632 301h1M440 302h1M444 302h1M626 302h1M632 302h1M439 303h1M443 303h2M626 303h1M632 303h1M440 304h3M631 304h1M626 326h3M625 327h1M629 327h2M626 328h1M630 328h1M627 329h1M631 329h1M627 330h1M631 330h1M627 331h1M631 331h1M626 332h1M630 332h1M625 333h1M629 333h2M626 334h3M239 341h1M238 342h3M239 343h1M180 344h1M186 344h1M192 344h1M180 345h1M186 345h1M192 345h1M179 346h3M184 346h5M191 346h3M180 347h1M186 347h1M192 347h1M180 348h1M186 348h1M192 348h1M181 349h1M186 349h1M191 349h1M181 350h1M186 350h1M191 350h1M182 351h2M186 351h1M189 351h2M184 352h5M186 353h1M186 354h1M186 355h1M182 356h9M235 356h5M186 357h1M234 357h1M240 357h2M186 358h1M233 358h1M242 358h1M186 359h1M234 359h1M243 359h1M186 360h1M235 360h1M244 360h1M236 361h1M244 361h1M236 362h1M245 362h1M237 363h1M245 363h1M237 364h1M245 364h1M237 365h1M245 365h1M236 366h1M245 366h1M236 367h1M244 367h1M235 368h1M244 368h1M234 369h1M243 369h1M233 370h1M242 370h1M166 371h1M172 371h1M178 371h1M234 371h1M240 371h2M166 372h1M172 372h1M178 372h1M235 372h5M165 373h3M170 373h5M177 373h3M238 373h3M166 374h1M172 374h1M178 374h1M239 374h1M166 375h1M172 375h1M178 375h1M167 376h1M172 376h1M177 376h1M167 377h1M172 377h1M177 377h1M168 378h2M172 378h1M175 378h2M170 379h5M82 380h1M85 380h1M88 380h1M172 380h1M81 381h2M84 381h3M88 381h2M172 381h1M82 382h1M85 382h1M88 382h1M172 382h1M335 382h1M338 382h1M83 383h1M85 383h1M87 383h1M168 383h9M335 383h1M338 383h1M84 384h3M172 384h1M335 384h1M338 384h1M85 385h1M172 385h1M335 385h1M338 385h1M83 386h5M172 386h1M335 386h5M85 387h1M172 387h1M235 387h5M338 387h1M85 388h1M234 388h1M240 388h2M338 388h1M233 389h1M242 389h1M338 389h1M234 390h1M243 390h1M338 390h1M235 391h1M244 391h1M236 392h1M244 392h1M320 392h3M236 393h1M245 393h1M319 393h1M323 393h2M237 394h1M245 394h1M320 394h1M324 394h1M97 395h1M113 395h1M237 395h1M245 395h1M321 395h1M325 395h1M98 396h1M112 396h1M237 396h1M245 396h1M321 396h1M325 396h1M625 396h1M628 396h1M631 396h1M99 397h1M111 397h1M236 397h1M245 397h1M321 397h1M325 397h1M624 397h2M627 397h3M631 397h2M100 398h1M110 398h1M236 398h1M244 398h1M320 398h1M324 398h1M625 398h1M628 398h1M631 398h1M100 399h1M110 399h1M235 399h1M244 399h1M319 399h1M323 399h2M626 399h1M628 399h1M630 399h1M101 400h1M109 400h1M234 400h1M243 400h1M320 400h3M627 400h3M101 401h1M109 401h1M233 401h1M242 401h1M628 401h1M101 402h1M109 402h1M234 402h1M240 402h2M626 402h5M97 403h17M235 403h5M628 403h1M101 404h1M109 404h1M628 404h1M101 405h1M109 405h1M101 406h1M109 406h1M625 406h1M628 406h1M631 406h1M100 407h1M110 407h1M625 407h1M627 407h1M629 407h1M631 407h1M100 408h1M110 408h1M625 408h1M628 408h1M631 408h1M99 409h1M111 409h1M626 409h1M630 409h1M98 410h1M112 410h1M627 410h3M97 411h1M113 411h1M628 411h1M626 412h5M628 413h1M628 414h1"/>
<path stroke="#00FFFF" d="M153 286h1M155 287h1M157 288h1M159 290h1M161 291h1M163 292h1M165 293h1M167 294h1M169 295h1M171 297h1M173 298h1M175 299h1M177 300h1M179 301h1M181 303h1M183 304h1M185 305h1M187 306h1M189 307h1M191 309h1M193 310h1M195 311h1M197 312h1M199 313h1M201 314h1M203 316h1M205 317h1M207 318h1M209 319h1M211 320h1M213 322h1M215 323h1M217 324h1M219 325h1M221 326h1M223 328h1M225 329h1M227 330h1M229 331h1M231 332h1M233 333h1M235 335h1M237 336h1"/>
</g>
</svg>
<div id="info">
<div><span class="w">Astrolog 5.41G</span></div>
<div><span class="l">Inner ring:</span></div>
<div><span class="l">Chart of the Moment</span></div>
<div><span class="w">Sat February 21, 2026</span></div>
<div><span class="w"> 5:01:00am (ST -8:00 GMT)</span></div>
<div><span class="l">San Francisco, CA</span></div>
<div><span class="l">122&deg;41'00"W 37&deg;79'00"N</span></div>
<div><span class="l">Outer ring - Transit:</span></div>
<div><span class="y">Sat February 21, 2026</span></div>
<div><span class="y"> 3:01:14pm (ST +2:00 GMT)</span></div>
<div><span class="l"> 26&deg;43'00"E 58&deg;23'00"N</span></div>
<div><span class="l">Placidus houses.</span></div>
<div><span class="l">Tropical, Geocentric.</span></div>
<div><span class="y">Julian Day = 2461093.0425</span></div>
<div><span class="l">Obliquity = 23&deg;26'09"</span></div>
<div><span class="l">Sidereal time:  0:53:57</span></div>
<div><span class="l">DeltaT =  95.3889</span></div>
<div> </div>
<div><span class="r"> 1st house: </span><span class="y">24Cap13</span></div>
<div><span class="y"> 2nd house: </span><span class="b"> 7Pis45</span></div>
<div><span class="g"> 3rd house: </span><span class="r">17Ari09</span></div>
<div><span class="b"> 4th house: </span><span class="y">16Tau30</span></div>
<div><span class="r"> 5th house: </span><span class="g"> 9Gem32</span></div>
<div><span class="y"> 6th house: </span><span class="b"> 0Can37</span></div>
<div><span class="g"> 7th house: </span><span class="b">24Can13</span></div>
<div><span class="b"> 8th house: </span><span class="y"> 7Vir45</span></div>
<div><span class="r"> 9th house: </span><span class="g">17Lib09</span></div>
<div><span class="y">10th house: </span><span class="b">16Sco30</span></div>
<div><span class="g">11th house: </span><span class="r"> 9Sag32</span></div>
<div><span class="b">12th house: </span><span class="y"> 0Cap37</span></div>
<div> </div>
<div><span class="r"> Sun: </span><span class="b"> 2Pis54</span> <span class="l"> + 0&deg;00'</span></div>
<div><span class="b">Moon: </span><span class="r">23Ari53</span> <span class="l"> + 3&deg;44'</span></div>
<div><span class="g">Merc: </span><span class="b">20Pis45</span> <span class="l"> + 1&deg;39'</span></div>
<div><span class="y">Venu: </span><span class="b">13Pis54</span> <span class="l"> - 1&deg;27'</span></div>
<div><span class="r">Mars: </span><span class="g">22Aqu52</span> <span class="l"> - 1&deg;05'</span></div>
<div><span class="r">Jupi: </span><span class="b">15Can35</span><span class="w">R</span><span class="l"> + 0&deg;20'</span></div>
<div><span class="y">Satu: </span><span class="r"> 0Ari51</span> <span class="l"> - 2&deg;08'</span></div>
<div><span class="g">Uran: </span><span class="y">27Tau36</span> <span class="l"> - 0&deg;11'</span></div>
<div><span class="b">Nept: </span><span class="r"> 0Ari47</span> <span class="l"> - 1&deg;18'</span></div>
<div><span class="b">Plut: </span><span class="g"> 4Aqu19</span> <span class="l"> - 3&deg;51'</span></div>
<div> </div>
<div><span class="l">Fire: 3, Earth: 1,</span></div>
<div><span class="l">Air : 2, Water: 4</span></div>
<div><span class="l">Car: 4, Fix: 3, Mut: 3</span></div>
<div><span class="l">Yang: 5, Yin: 5</span></div>
<div><span class="l">M: 0, N: 10, A: 8, D: 2</span></div>
</div>
</body></html>
